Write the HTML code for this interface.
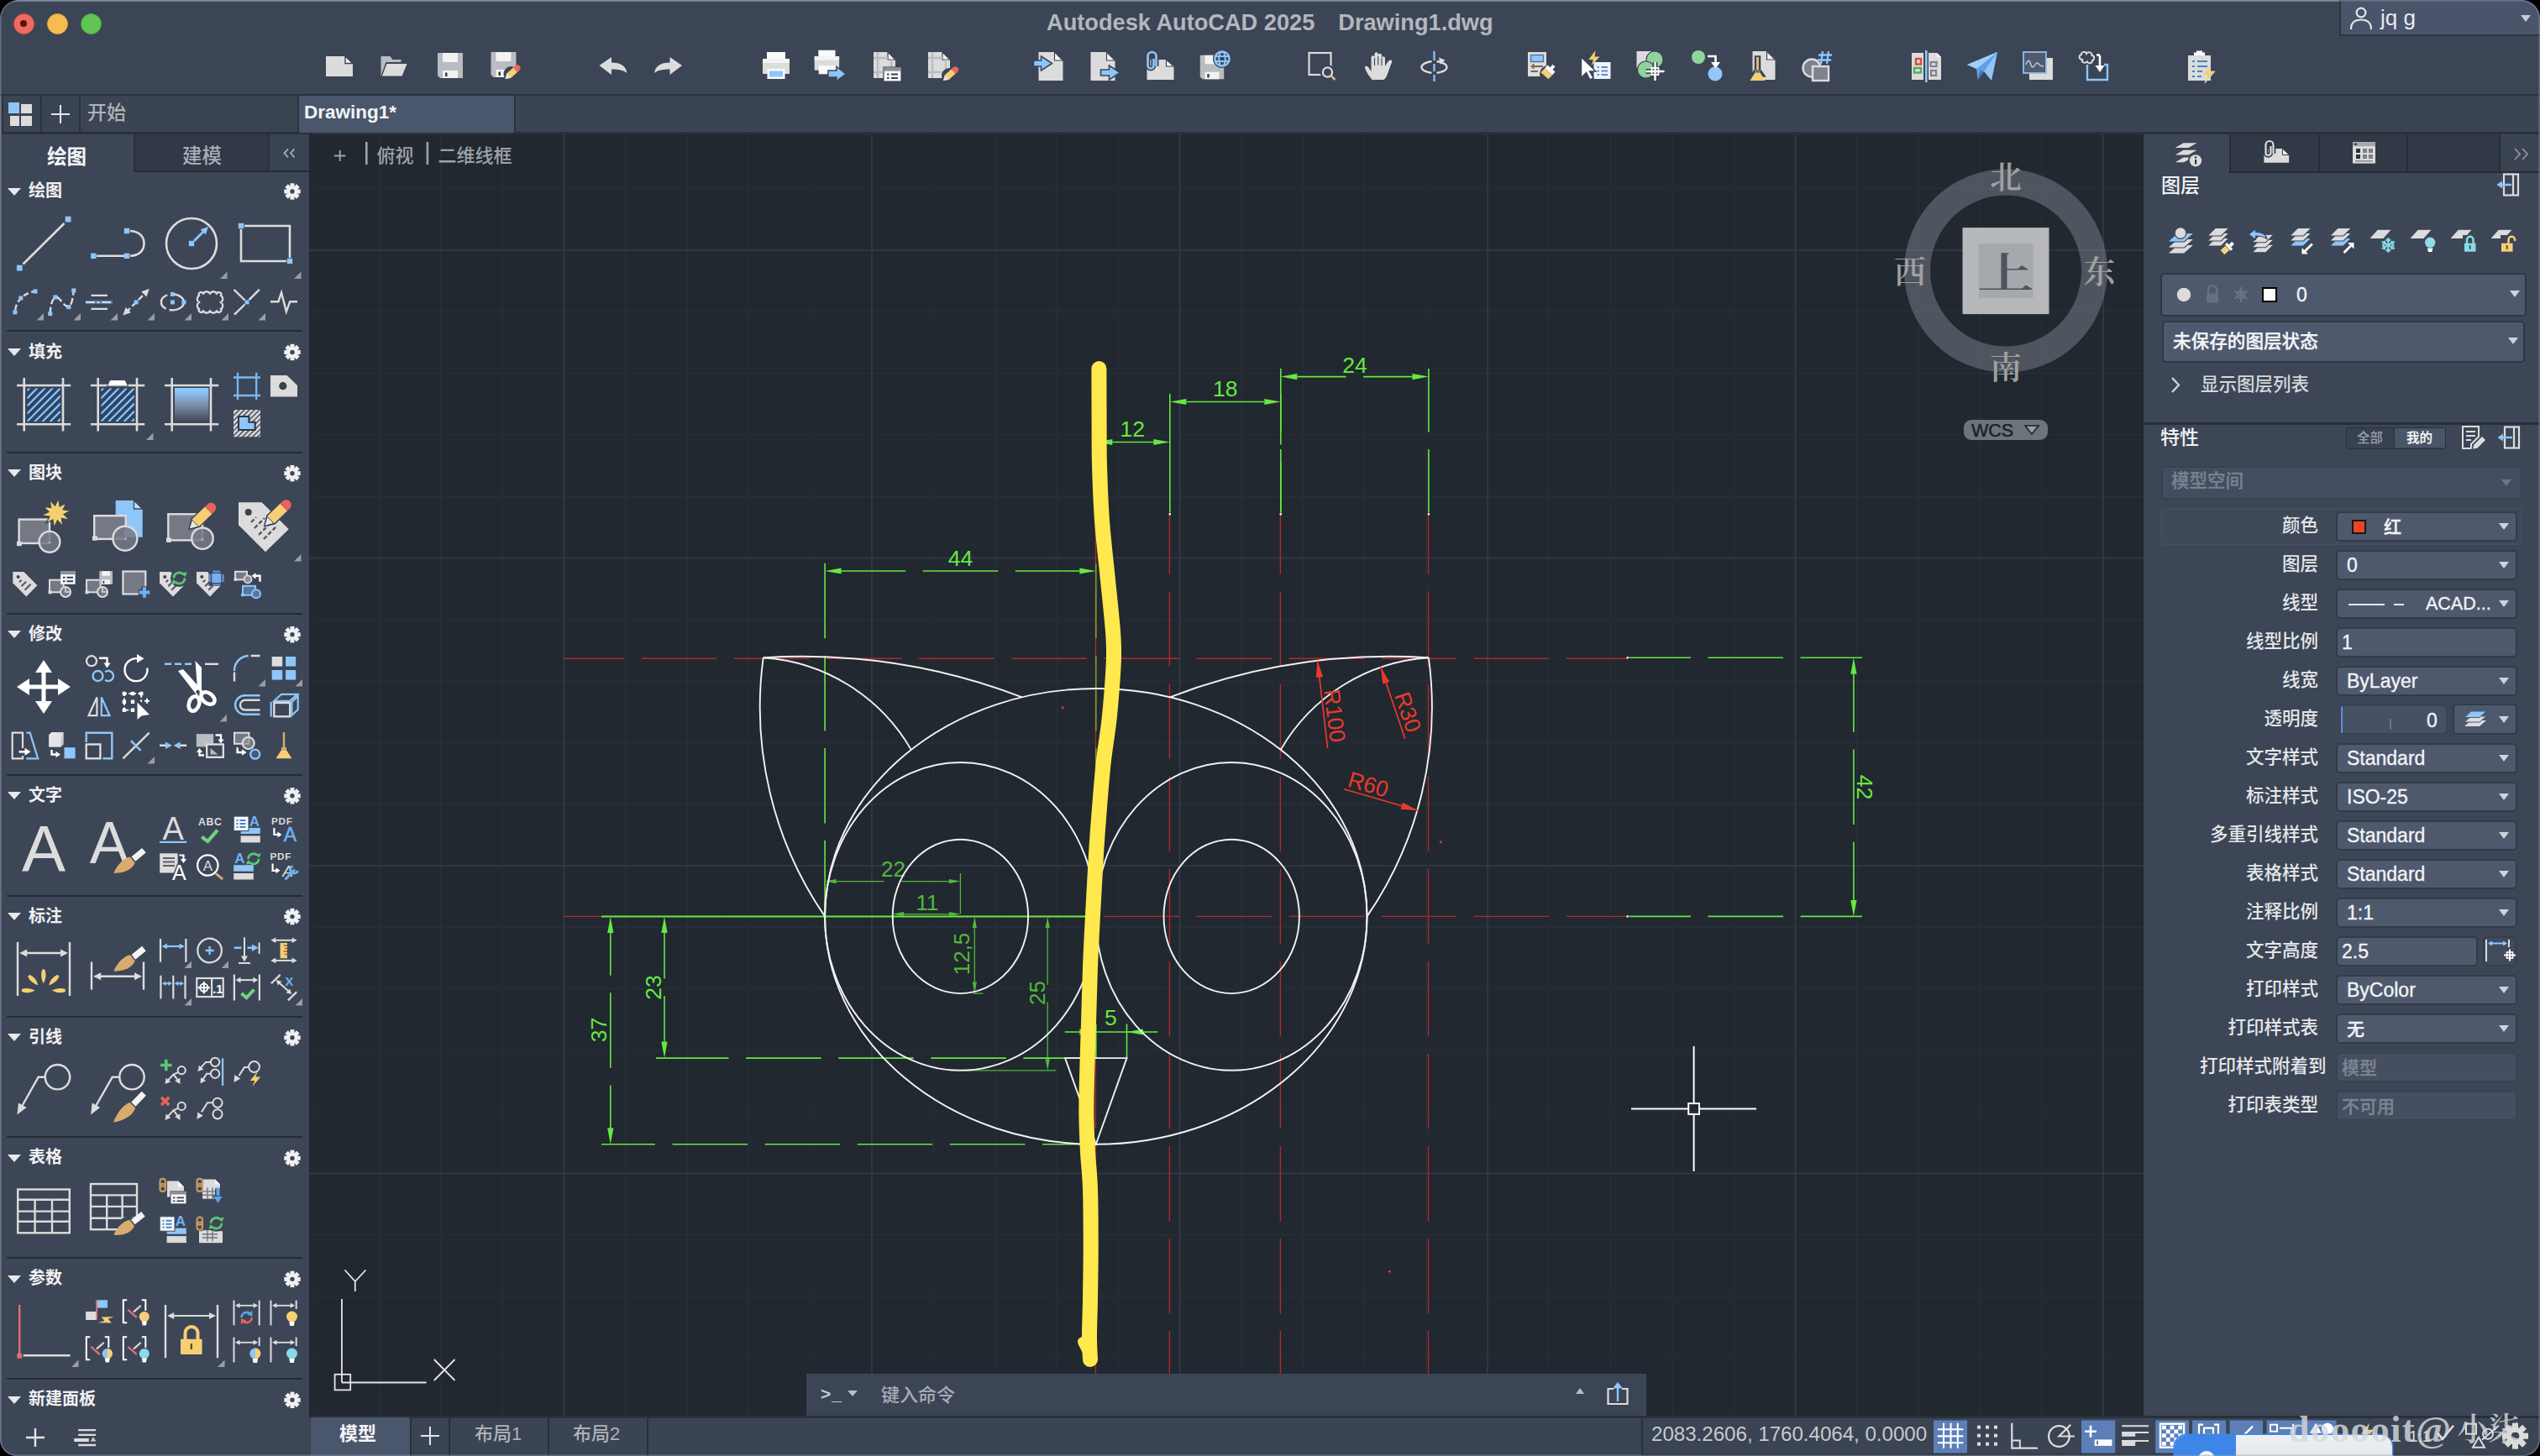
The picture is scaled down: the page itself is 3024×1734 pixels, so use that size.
<!DOCTYPE html><html lang="zh"><head><meta charset="utf-8"><title>Autodesk AutoCAD 2025 Drawing1.dwg</title><style>
*{box-sizing:border-box;margin:0;padding:0}
html,body{width:3024px;height:1734px;overflow:hidden;background:#000}
body{font-family:"Liberation Sans","Noto Sans CJK SC",sans-serif;color:#e6e8ec;position:relative}
.abs{position:absolute}
.t{position:absolute;white-space:nowrap;line-height:1}
#win{position:absolute;left:0;top:0;width:3024px;height:1734px;background:#3c4555;border-radius:22px 22px 20px 20px;overflow:hidden}
#canvas{position:absolute;left:368px;top:160px;width:2184px;height:1526px;background:#212830;overflow:hidden}
.fld{position:absolute;background:#4e596e;border:2px solid #333b48;border-radius:5px}
.fld.dis{background:#454f61;border-color:#3a4351}
.lbl{position:absolute;white-space:nowrap;line-height:1;text-align:right;font-size:21.5px;color:#e4e6ea;font-weight:500}
.val{position:absolute;white-space:nowrap;line-height:1;font-size:22px;color:#f2f3f5;font-weight:500;-webkit-text-stroke-width:0.35px}
.arr{position:absolute;width:0;height:0;border-left:6.5px solid transparent;border-right:6.5px solid transparent;border-top:8.5px solid #d0d3d8}
.hdr{position:absolute;white-space:nowrap;line-height:1;font-size:20px;font-weight:700;color:#f0f1f3}
.tri{position:absolute;width:0;height:0;border-left:8px solid transparent;border-right:8px solid transparent;border-top:9px solid #e8e9eb}
.sep{position:absolute;left:8px;width:352px;height:2px;background:#252b35}
</style></head><body><div id="win">
<div id="canvas">
<svg class="abs" style="left:0;top:0" width="2184" height="1526" viewBox="368 160 2184 1526" font-family="'Liberation Sans','Noto Sans CJK SC',sans-serif">
<path d="M378.3 160V1686M451.6 160V1686M524.9 160V1686M598.2 160V1686M744.8 160V1686M818.1 160V1686M891.4 160V1686M964.7 160V1686M1111.3 160V1686M1184.6 160V1686M1257.9 160V1686M1331.2 160V1686M1477.8 160V1686M1551.1 160V1686M1624.4 160V1686M1697.7 160V1686M1844.3 160V1686M1917.6 160V1686M1990.9 160V1686M2064.2 160V1686M2210.8 160V1686M2284.1 160V1686M2357.4 160V1686M2430.7 160V1686M368 224.7H2552M368 371.3H2552M368 444.6H2552M368 517.9H2552M368 591.2H2552M368 737.8H2552M368 811.1H2552M368 884.4H2552M368 957.7H2552M368 1104.3H2552M368 1177.6H2552M368 1250.9H2552M368 1324.2H2552M368 1470.8H2552M368 1544.1H2552M368 1617.4H2552" stroke="#272e38" stroke-width="1.5" fill="none"/>
<path d="M671.5 160V1686M1038.0 160V1686M1404.5 160V1686M1771.0 160V1686M2137.5 160V1686M2504.0 160V1686M368 298.0H2552M368 664.5H2552M368 1031.0H2552M368 1397.5H2552" stroke="#343b47" stroke-width="1.6" fill="none"/>
<line x1="671.0" y1="784.2" x2="1937.0" y2="784.2" stroke="#b3282b" stroke-width="1.35" stroke-dasharray="89.5 20.6" stroke-dashoffset="17.30"/>
<line x1="671.0" y1="1091.4" x2="1937.0" y2="1091.4" stroke="#b3282b" stroke-width="1.35" stroke-dasharray="89.5 20.6" stroke-dashoffset="17.30"/>
<line x1="1304.4" y1="611.5" x2="1304.4" y2="1877.5" stroke="#b3282b" stroke-width="1.35" stroke-dasharray="89.5 20.6" stroke-dashoffset="17.30"/>
<line x1="1392.4" y1="611.5" x2="1392.4" y2="1877.5" stroke="#b3282b" stroke-width="1.35" stroke-dasharray="89.5 20.6" stroke-dashoffset="17.30"/>
<line x1="1524.4" y1="611.5" x2="1524.4" y2="1877.5" stroke="#b3282b" stroke-width="1.35" stroke-dasharray="89.5 20.6" stroke-dashoffset="17.30"/>
<line x1="1700.5" y1="611.5" x2="1700.5" y2="1877.5" stroke="#b3282b" stroke-width="1.35" stroke-dasharray="89.5 20.6" stroke-dashoffset="17.30"/>
<rect x="1264" y="841.7" width="2.4" height="2.4" fill="#e0453c"/>
<rect x="1714" y="1001.5" width="2.4" height="2.4" fill="#e0453c"/>
<rect x="1653" y="1513" width="2.4" height="2.4" fill="#e0453c"/>
<line x1="1392.8" y1="469.0" x2="1392.8" y2="610.5" stroke="#66e840" stroke-width="1.6"/>
<line x1="1524.8" y1="439.0" x2="1524.8" y2="610.5" stroke="#66e840" stroke-width="1.6" stroke-dasharray="89.5 20.6" stroke-dashoffset="14.05"/>
<line x1="1524.8" y1="469.0" x2="1524.8" y2="610.5" stroke="#66e840" stroke-width="1.6" stroke-dasharray="89.5 20.6" stroke-dashoffset="29.05"/>
<line x1="1700.9" y1="439.0" x2="1700.9" y2="610.5" stroke="#66e840" stroke-width="1.6" stroke-dasharray="89.5 20.6" stroke-dashoffset="14.05"/>
<line x1="1324.3" y1="526.5" x2="1373.3" y2="526.5" stroke="#66e840" stroke-width="1.6"/><polygon points="1304.8,526.5 1324.3,522.9 1324.3,530.1" fill="#66e840"/><polygon points="1392.8,526.5 1373.3,530.1 1373.3,522.9" fill="#66e840"/>
<line x1="1412.3" y1="478.5" x2="1505.3" y2="478.5" stroke="#66e840" stroke-width="1.6"/><polygon points="1392.8,478.5 1412.3,474.9 1412.3,482.1" fill="#66e840"/><polygon points="1524.8,478.5 1505.3,482.1 1505.3,474.9" fill="#66e840"/>
<line x1="1544.3" y1="448.6" x2="1681.4" y2="448.6" stroke="#66e840" stroke-width="1.6" stroke-dasharray="89.5 20.6" stroke-dashoffset="31.28"/><polygon points="1524.8,448.6 1544.3,445.0 1544.3,452.2" fill="#66e840"/><polygon points="1700.9,448.6 1681.4,452.2 1681.4,445.0" fill="#66e840"/>
<text x="1348.3" y="519.8" fill="#66e840" font-size="26.5" text-anchor="middle">12</text>
<text x="1458.8" y="472.0" fill="#66e840" font-size="26.5" text-anchor="middle">18</text>
<text x="1612.9" y="444.0" fill="#66e840" font-size="26.5" text-anchor="middle">24</text>
<line x1="982.1" y1="670.0" x2="982.1" y2="1091.4" stroke="#66e840" stroke-width="1.6" stroke-dasharray="89.5 20.6" stroke-dashoffset="-0.80"/>
<line x1="1304.8" y1="670.0" x2="1304.8" y2="1091.4" stroke="#7f9a28" stroke-width="1.6" stroke-dasharray="89.5 20.6" stroke-dashoffset="-0.80"/>
<line x1="1001.6" y1="680.0" x2="1285.3" y2="680.0" stroke="#66e840" stroke-width="1.6" stroke-dasharray="89.5 20.6" stroke-dashoffset="12.98"/><polygon points="982.1,680.0 1001.6,676.4 1001.6,683.6" fill="#66e840"/><polygon points="1304.8,680.0 1285.3,683.6 1285.3,676.4" fill="#66e840"/>
<text x="1143.4" y="674.0" fill="#66e840" font-size="26.5" text-anchor="middle">44</text>
<line x1="716.0" y1="1091.4" x2="1304.8" y2="1091.4" stroke="#66e840" stroke-width="2"/>
<line x1="1143.4" y1="1040.0" x2="1143.4" y2="1088.4" stroke="#52b83a" stroke-width="1.3"/>
<line x1="995.6" y1="1049.6" x2="1129.9" y2="1049.6" stroke="#52b83a" stroke-width="1.3" stroke-dasharray="89.5 20.6" stroke-dashoffset="32.62"/><polygon points="982.1,1049.6 995.6,1047.0 995.6,1052.2" fill="#52b83a"/><polygon points="1143.4,1049.6 1129.9,1052.2 1129.9,1047.0" fill="#52b83a"/>
<text x="1063.5" y="1044.0" fill="#52b83a" font-size="26" text-anchor="middle">22</text>
<line x1="1076.2" y1="1088.6" x2="1129.9" y2="1088.6" stroke="#52b83a" stroke-width="1.3"/><polygon points="1062.7,1088.6 1076.2,1086.0 1076.2,1091.2" fill="#52b83a"/><polygon points="1143.4,1088.6 1129.9,1091.2 1129.9,1086.0" fill="#52b83a"/>
<text x="1104.0" y="1083.8" fill="#52b83a" font-size="26" text-anchor="middle">11</text>
<line x1="1160.3" y1="1104.9" x2="1160.3" y2="1169.6" stroke="#52b83a" stroke-width="1.3"/><polygon points="1160.3,1091.4 1162.9,1104.9 1157.7,1104.9" fill="#52b83a"/><polygon points="1160.3,1183.1 1157.7,1169.6 1162.9,1169.6" fill="#52b83a"/>
<line x1="1158.3" y1="1183.1" x2="1170.3" y2="1183.1" stroke="#52b83a" stroke-width="1.3"/>
<text x="1154.0" y="1136.0" fill="#52b83a" font-size="26" text-anchor="middle" transform="rotate(-90 1154.0 1136.0)">12,5</text>
<line x1="1247.2" y1="1104.9" x2="1247.2" y2="1261.3" stroke="#52b83a" stroke-width="1.3" stroke-dasharray="89.5 20.6" stroke-dashoffset="21.61"/><polygon points="1247.2,1091.4 1249.8,1104.9 1244.6,1104.9" fill="#52b83a"/><polygon points="1247.2,1274.8 1244.6,1261.3 1249.8,1261.3" fill="#52b83a"/>
<line x1="1146.0" y1="1274.8" x2="1257.0" y2="1274.8" stroke="#52b83a" stroke-width="1.3"/>
<text x="1244.0" y="1182.6" fill="#52b83a" font-size="26" text-anchor="middle" transform="rotate(-90 1244.0 1182.6)">25</text>
<line x1="726.8" y1="1110.9" x2="726.8" y2="1343.3" stroke="#66e840" stroke-width="1.6" stroke-dasharray="89.5 20.6" stroke-dashoffset="38.65"/><polygon points="726.8,1091.4 730.4,1110.9 723.2,1110.9" fill="#66e840"/><polygon points="726.8,1362.8 723.2,1343.3 730.4,1343.3" fill="#66e840"/>
<line x1="716.0" y1="1362.8" x2="1304.8" y2="1362.8" stroke="#66e840" stroke-width="1.6" stroke-dasharray="89.5 20.6" stroke-dashoffset="25.60"/>
<text x="722.0" y="1226.5" fill="#66e840" font-size="26.5" text-anchor="middle" transform="rotate(-90 722.0 1226.5)">37</text>
<line x1="791.0" y1="1110.9" x2="791.0" y2="1240.6" stroke="#66e840" stroke-width="1.6" stroke-dasharray="89.5 20.6" stroke-dashoffset="34.95"/><polygon points="791.0,1091.4 794.6,1110.9 787.4,1110.9" fill="#66e840"/><polygon points="791.0,1260.1 787.4,1240.6 794.6,1240.6" fill="#66e840"/>
<line x1="781.0" y1="1260.1" x2="1304.8" y2="1260.1" stroke="#66e840" stroke-width="1.6" stroke-dasharray="89.5 20.6" stroke-dashoffset="3.05"/>
<text x="787.4" y="1176.0" fill="#66e840" font-size="26.5" text-anchor="middle" transform="rotate(-90 787.4 1176.0)">23</text>
<line x1="1341.5" y1="1219.5" x2="1341.5" y2="1260.1" stroke="#66e840" stroke-width="1.6"/>
<line x1="1304.8" y1="1219.5" x2="1304.8" y2="1260.1" stroke="#66e840" stroke-width="1.6"/>
<line x1="1267.7" y1="1229.0" x2="1378.3" y2="1229.0" stroke="#66e840" stroke-width="1.6"/>
<polygon points="1341.5,1229.0 1361.0,1225.4 1361.0,1232.6" fill="#66e840"/>
<polygon points="1304.8,1229.0 1285.3,1232.6 1285.3,1225.4" fill="#66e840"/>
<text x="1322.4" y="1221.0" fill="#66e840" font-size="26.5" text-anchor="middle">5</text>
<line x1="1939.5" y1="783.3" x2="2217.0" y2="783.3" stroke="#66e840" stroke-width="1.6" stroke-dasharray="89.5 20.6" stroke-dashoffset="16.10"/>
<line x1="1939.5" y1="1091.4" x2="2217.0" y2="1091.4" stroke="#66e840" stroke-width="1.6" stroke-dasharray="89.5 20.6" stroke-dashoffset="16.10"/>
<line x1="2206.9" y1="802.8" x2="2206.9" y2="1071.9" stroke="#66e840" stroke-width="1.6" stroke-dasharray="89.5 20.6" stroke-dashoffset="20.32"/><polygon points="2206.9,783.3 2210.5,802.8 2203.3,802.8" fill="#66e840"/><polygon points="2206.9,1091.4 2203.3,1071.9 2210.5,1071.9" fill="#66e840"/>
<text x="2210.5" y="937.4" fill="#66e840" font-size="26.5" text-anchor="middle" transform="rotate(90 2210.5 937.4)">42</text>
<rect x="1936.5" y="782.1" width="2.4" height="2.4" fill="#f4f4d0"/>
<rect x="1936.5" y="1090.2" width="2.4" height="2.4" fill="#f4f4d0"/>
<rect x="1391.6" y="611.1" width="2.4" height="2.4" fill="#f4f4d0"/>
<rect x="1523.6" y="611.1" width="2.4" height="2.4" fill="#f4f4d0"/>
<rect x="1699.7" y="611.1" width="2.4" height="2.4" fill="#f4f4d0"/>
<g fill="none" stroke="#f2f2f2" stroke-width="1.9"><ellipse cx="1304.8" cy="1091.4" rx="322.7" ry="271.4"/><ellipse cx="1143.4" cy="1091.4" rx="161.4" ry="183.4"/><ellipse cx="1143.4" cy="1091.4" rx="80.7" ry="91.7"/><path d="M1216.8 830.3A733.5 733.5 0 0 0 908.7 783.3"/><path d="M1084.8 892.9A220.1 220.1 0 0 0 908.7 783.3"/><path d="M908.7 783.3A440.1 440.1 0 0 0 982.1 1091.4"/><ellipse cx="1466.2" cy="1091.4" rx="161.4" ry="183.4"/><ellipse cx="1466.2" cy="1091.4" rx="80.7" ry="91.7"/><path d="M1392.8 830.3A733.5 733.5 0 0 1 1700.9 783.3"/><path d="M1524.8 892.9A220.1 220.1 0 0 1 1700.9 783.3"/><path d="M1700.9 783.3A440.1 440.1 0 0 1 1627.5 1091.4"/><path d="M1268.1 1260.1H1341.5L1304.8 1362.8Z"/></g>
<line x1="1568.6" y1="786.8" x2="1580.6" y2="891.0" stroke="#ea3a2c" stroke-width="1.7"/><polygon points="1568.6,786.8 1575.1,806.2 1566.7,807.1" fill="#ea3a2c"/><text x="1580.0" y="853.5" fill="#ea3a2c" font-size="26.5" text-anchor="middle" transform="rotate(83.4 1580.0 853.5)">R100</text>
<line x1="1643.8" y1="794.3" x2="1672.8" y2="879.7" stroke="#ea3a2c" stroke-width="1.7"/><polygon points="1643.8,794.3 1654.2,811.9 1646.3,814.6" fill="#ea3a2c"/><text x="1667.5" y="851.0" fill="#ea3a2c" font-size="26.5" text-anchor="middle" transform="rotate(71.2 1667.5 851.0)">R30</text>
<line x1="1600.0" y1="939.7" x2="1688.0" y2="965.3" stroke="#ea3a2c" stroke-width="1.7"/><polygon points="1688.0,965.3 1667.6,963.7 1670.0,955.7" fill="#ea3a2c"/><text x="1626.5" y="943.0" fill="#ea3a2c" font-size="26.5" text-anchor="middle" transform="rotate(16.2 1626.5 943.0)">R60</text>
<path d="M1308.4 439C1308.4 449.2 1308.5 480.8 1308.6 500.0C1308.7 519.2 1308.4 534.0 1309.0 554.0C1309.6 574.0 1310.4 598.0 1312.0 620.0C1313.6 642.0 1316.3 664.0 1318.5 686.0C1320.7 708.0 1323.8 736.0 1325.0 752.0C1326.2 768.0 1326.2 771.1 1326.0 782.0C1325.8 792.9 1325.0 804.4 1324.0 817.6C1323.0 830.9 1321.7 846.9 1320.0 861.5C1318.3 876.1 1315.7 890.8 1314.0 905.5C1312.3 920.2 1311.2 934.9 1310.0 949.5C1308.8 964.1 1307.6 978.8 1306.6 993.0C1305.6 1007.2 1304.9 1018.8 1304.0 1035.0C1303.1 1051.2 1302.0 1070.5 1301.0 1090.0C1300.0 1109.5 1298.8 1130.7 1298.0 1152.0C1297.2 1173.3 1296.7 1196.0 1296.0 1218.0C1295.3 1240.0 1294.4 1265.7 1294.0 1284.0C1293.6 1302.3 1293.2 1313.3 1293.4 1328.0C1293.6 1342.7 1294.2 1357.4 1295.0 1372.0C1295.8 1386.6 1297.4 1397.3 1298.0 1415.6C1298.6 1433.8 1298.7 1459.5 1298.7 1481.5C1298.7 1503.5 1298.3 1529.2 1298.0 1547.5C1297.7 1565.8 1297.0 1579.5 1297.0 1591.4C1297.0 1603.3 1297.8 1614.4 1298.0 1619.0" fill="none" stroke="#ffe94c" stroke-width="18" stroke-linecap="round" stroke-linejoin="round"/>
<path d="M1296 1612L1289 1598" fill="none" stroke="#ffe94c" stroke-width="12" stroke-linecap="round"/>
<g stroke="#ffffff" stroke-width="2" fill="none"><path d="M1942 1320.5H2010M2023 1320.5H2091M2016.6 1246V1314M2016.6 1327V1395"/><rect x="2010.2" y="1314.1" width="12.8" height="12.8"/></g>
<g stroke="#e6e6e6" stroke-width="1.8" fill="none"><rect x="398.6" y="1636.8" width="18.6" height="18.6"/><path d="M407 1646.5V1547M407 1646.5H507.5"/><path d="M410.5 1512.5L422.8 1526L435.5 1512.5M422.8 1526V1538"/><path d="M516.8 1619L541.5 1644M541.5 1619L516.8 1644"/></g>
<circle cx="2388" cy="322.6" r="105.5" fill="none" stroke="#848c96" stroke-opacity="0.46" stroke-width="31"/>
<rect x="2336.5" y="271.1" width="103" height="103" fill="#b6b8bb"/>
<rect x="2355.5" y="290.1" width="65" height="65" fill="#a5a8ad"/>
<text transform="translate(2388 342.5) scale(1.1 0.8)" x="0" y="0" font-size="62" font-weight="600" text-anchor="middle" fill="#50535a" font-family="'Noto Serif CJK SC','Liberation Serif',serif">上</text>
<text x="2388" y="223.8" font-size="38" font-weight="600" text-anchor="middle" fill="#a0a0a0" font-family="'Noto Serif CJK SC','Liberation Serif',serif">北</text>
<text x="2388" y="450.8" font-size="38" font-weight="600" text-anchor="middle" fill="#a0a0a0" font-family="'Noto Serif CJK SC','Liberation Serif',serif">南</text>
<text x="2274" y="337.2" font-size="38" font-weight="600" text-anchor="middle" fill="#a0a0a0" font-family="'Noto Serif CJK SC','Liberation Serif',serif">西</text>
<text x="2499.5" y="336.5" font-size="38" font-weight="600" text-anchor="middle" fill="#a0a0a0" font-family="'Noto Serif CJK SC','Liberation Serif',serif">东</text>
<rect x="2338" y="500" width="100" height="24" rx="9" fill="#6c747c"/>
<text x="2347" y="520" font-size="21.5" fill="#1d2127" stroke="#1d2127" stroke-width="0.5">WCS</text>
<path d="M2411 507H2427L2419 517Z" fill="#97a1aa" stroke="#1d2127" stroke-width="1.6"/>
<g fill="#9ea2a9" font-size="22" font-weight="500"><path d="M398 185.5H411.400M404.700 179V192" stroke="#9ea2a9" stroke-width="1.9"/><rect x="435" y="169" width="2.6" height="27"/><rect x="507.6" y="169" width="2.6" height="27"/><text x="448.5" y="192.5">俯视</text><text x="521.5" y="192.5">二维线框</text></g>
</svg>
<div class="abs" style="left:592px;top:1476px;width:1000px;height:50px;background:#3c4555"></div>
<div class="t" style="left:609px;top:1488.5px;font-size:21px;color:#c9ccd2;font-weight:700;letter-spacing:1px">&gt;_</div>
<div class="abs" style="left:641px;top:1496px;border-left:6px solid transparent;border-right:6px solid transparent;border-top:7px solid #b9bdc4"></div>
<div class="t" style="left:681px;top:1491px;font-size:22px;color:#a9adb5;font-weight:500">键入命令</div>
<div class="abs" style="left:1508px;top:1493px;border-left:5.5px solid transparent;border-right:5.5px solid transparent;border-bottom:7px solid #b9bdc4"></div>
<svg class="abs" style="left:1540px;top:1482px" width="36" height="36" viewBox="0 0 36 36" fill="none"><path d="M13 12H6.5V30H29.5V12H23" stroke="#dcdcdc" stroke-width="2.2"/><path d="M18 27V8" stroke="#8ec6fa" stroke-width="2.4"/><path d="M12 11.5L18 4L24 11.5Z" fill="#8ec6fa"/></svg>
</div>
<div class="abs" style="left:0;top:0;width:3024px;height:2px;background:#6a7383"></div>
<div class="abs" style="left:15.5px;top:15.5px;width:25px;height:25px;border-radius:50%;background:#ee6a5f;border:1px solid #d04e45"></div>
<div class="abs" style="left:55.5px;top:15.5px;width:25px;height:25px;border-radius:50%;background:#f5bd4f;border:1px solid #d8a137"></div>
<div class="abs" style="left:95.5px;top:15.5px;width:25px;height:25px;border-radius:50%;background:#61c554;border:1px solid #4aa73c"></div>
<div class="abs" style="left:24px;top:24px;width:8px;height:8px;border-radius:50%;background:#5c100c"></div>
<div class="t" style="left:1246px;top:12.5px;font-size:27.2px;font-weight:700;color:#b3b7be;word-spacing:0px">Autodesk AutoCAD 2025<span style="display:inline-block;width:28px"></span>Drawing1.dwg</div>
<div class="abs" style="left:2785px;top:0;width:239px;height:43px;background:#4a556b;border-left:2px solid #2f3643;border-bottom:2px solid #2f3643"></div>
<svg class="abs" style="left:2794px;top:5px" width="34" height="34" viewBox="0 0 34 34" fill="none" stroke="#e3e5e9" stroke-width="2.2"><circle cx="17" cy="10" r="5.4"/><path d="M5 30C5 21.500 10 18.500 17 18.500S29 21.500 29 30"/></svg>
<div class="t" style="left:2834px;top:7.5px;font-size:26px;color:#e8eaee">jq g</div>
<div class="arr" style="left:3001px;top:18px;border-top-color:#c9ccd2"></div>
<svg class="abs" style="left:0;top:56px" width="3024" height="48" viewBox="0 56 3024 48"><g transform="translate(384 59)"><path d="M4 8H26.500L36 16.500V32H4Z" fill="#dcdcdc"/><path d="M27 8V16.500H36Z" fill="#f4f4f4" stroke="#3c4555" stroke-width="1.4"/></g><g transform="translate(449.5 59)"><path d="M4 32V8H15L18 12H28V15H10Z" fill="#b9bcc0"/><path d="M10.5 16.5H36L29.5 32H4.5Z" fill="#dcdcdc" stroke="#3c4555" stroke-width="1.2"/></g><g transform="translate(516 59)"><path d="M5 4H35V34H8L5 31Z" fill="#b9bcc0"/><rect x="11" y="4" width="18" height="11" fill="#f2f2f2"/><rect x="11" y="25" width="18" height="9" fill="#f2f2f2"/><rect x="14" y="27.5" width="2.5" height="4.5" fill="#333a46"/></g><g transform="translate(581.5 59)"><g transform="translate(-2 -1)"><path d="M5 4H35V34H8L5 31Z" fill="#b9bcc0"/><rect x="11" y="4" width="18" height="11" fill="#f2f2f2"/><rect x="11" y="25" width="18" height="9" fill="#f2f2f2"/><rect x="14" y="27.5" width="2.5" height="4.5" fill="#333a46"/></g><circle cx="27" cy="29" r="9" fill="#3c4555"/><g transform="translate(20 35) rotate(-42)"><path d="M0 0L6 -3.6H19V3.6H6Z" fill="#f6cf74"/><path d="M0 0L6 -3.6V3.6Z" fill="#e8e4dc"/><path d="M16 -3.6H19.5A3.6 3.6 0 0 1 19.5 3.6H16Z" fill="#e8685e"/></g></g><g transform="translate(710 59)"><path d="M3.5 19L18 9V15.5C29 15.5 35.5 20 36.5 28C32 24.5 26 23.5 18 23.5V30Z" fill="#dcdcdc"/></g><g transform="translate(775.5 59)"><path d="M36.5 19L22 9V15.5C11 15.5 4.5 20 3.5 28C8 24.5 14 23.5 22 23.5V30Z" fill="#dcdcdc"/></g><g transform="translate(904 59)"><rect x="9" y="3" width="22" height="10" fill="#fbfbfb"/><path d="M4 11H36V29H4Z" fill="#dcdcdc"/><rect x="4" y="11" width="32" height="5" fill="#f4f4f4"/><rect x="9.5" y="23" width="21" height="12" fill="#fbfbfb"/><rect x="12" y="25.5" width="16" height="7" fill="#8ec6fa"/></g><g transform="translate(969 59)"><g transform="translate(-3 -2) scale(0.92)"><rect x="9" y="3" width="22" height="10" fill="#fbfbfb"/><path d="M4 11H36V29H4Z" fill="#dcdcdc"/><rect x="4" y="11" width="32" height="5" fill="#f4f4f4"/><rect x="9.5" y="23" width="21" height="11" fill="#fbfbfb"/></g><path d="M17 25H27V20.5L38 29L27 37.5V33H17Z" fill="#8ec6fa" stroke="#3c4555" stroke-width="1.5"/></g><g transform="translate(1035 59)"><path d="M5 3H22L31 12V34H5Z" fill="#dcdcdc"/><path d="M22 3V12H31Z" fill="#f6f6f6" stroke="#3c4555" stroke-width="1.2"/><path d="M10 3V34M5 10H22M5 27H31M26 12V34" stroke="#b9bcc0" stroke-width="2.4"/><rect x="17" y="21" width="21" height="17" fill="#fbfbfb" stroke="#3c4555" stroke-width="1.2"/><rect x="17.6" y="21.6" width="19.8" height="4" fill="#8a8e96"/><path d="M21 29.5H23.5M26 29.5H34M21 34H23.5M26 34H34" stroke="#3a424f" stroke-width="2"/></g><g transform="translate(1100 59)"><path d="M5 3H22L31 12V34H5Z" fill="#dcdcdc"/><path d="M22 3V12H31Z" fill="#f6f6f6" stroke="#3c4555" stroke-width="1.2"/><path d="M10 3V34M5 10H22M5 27H31M26 12V34" stroke="#b9bcc0" stroke-width="2.4"/><circle cx="30" cy="31" r="9" fill="#3c4555"/><g transform="translate(3 2)"><g transform="translate(20 35) rotate(-42)"><path d="M0 0L6 -3.6H19V3.6H6Z" fill="#f6cf74"/><path d="M0 0L6 -3.6V3.6Z" fill="#e8e4dc"/><path d="M16 -3.6H19.5A3.6 3.6 0 0 1 19.5 3.6H16Z" fill="#e8685e"/></g></g></g><g transform="translate(1229.5 59)"><path d="M7 3H26L36 13V37H7Z" fill="#dcdcdc"/><path d="M26 3V13H36Z" fill="#f6f6f6" stroke="#3c4555" stroke-width="1.2"/><path d="M1 13H10V8L23 16.5L10 25V20H1Z" fill="#8ec6fa" stroke="#3c4555" stroke-width="1.6"/></g><g transform="translate(1294.5 59)"><g transform="translate(-3 0)"><path d="M7 3H26L36 13V37H7Z" fill="#dcdcdc"/><path d="M26 3V13H36Z" fill="#f6f6f6" stroke="#3c4555" stroke-width="1.2"/></g><path d="M16 24H26V19L39 27.5L26 36V31H16Z" fill="#8ec6fa" stroke="#3c4555" stroke-width="1.6"/></g><g transform="translate(1360.5 59)"><path d="M5 12H28L37 20V36H5Z" fill="#dcdcdc"/><path d="M28 12V20H37Z" fill="#f6f6f6" stroke="#3c4555" stroke-width="1.2"/><path d="M13 11V19A3.5 3.5 0 0 1 6 19V8A5 5 0 0 1 16 8V20" fill="none" stroke="#3c4555" stroke-width="6"/><path d="M13 11V19A3.5 3.5 0 0 1 6 19V8A5 5 0 0 1 16 8V20" fill="none" stroke="#8ec6fa" stroke-width="2.6"/></g><g transform="translate(1426 59)"><g transform="translate(-2 3) scale(0.95)"><path d="M5 4H35V34H8L5 31Z" fill="#b9bcc0"/><rect x="11" y="4" width="14" height="11" fill="#f2f2f2"/><rect x="11" y="25" width="18" height="9" fill="#f2f2f2"/><rect x="14" y="27.5" width="2.5" height="4.5" fill="#333a46"/></g><circle cx="29" cy="11" r="11" fill="#3c4555"/><circle cx="29" cy="11" r="8.6" fill="none" stroke="#8ec6fa" stroke-width="2.4"/><ellipse cx="29" cy="11" rx="3.8" ry="8.6" fill="none" stroke="#8ec6fa" stroke-width="2"/><path d="M20.5 8H37.5M20.5 14H37.5" stroke="#8ec6fa" stroke-width="2"/></g><g transform="translate(1554.5 59)"><rect x="4" y="4" width="26" height="26" fill="none" stroke="#dcdcdc" stroke-width="2.2"/><circle cx="26" cy="27" r="9" fill="#3c4555"/><circle cx="26" cy="27" r="5.6" fill="none" stroke="#dcdcdc" stroke-width="2.2"/><path d="M30.5 31.5L35 36" stroke="#d9b47c" stroke-width="2.6"/></g><g transform="translate(1621.5 59)"><path d="M12 36C9 32 5 27 3.5 22C3 19.5 6 19 7.5 21L11 26V9.5C11 6.5 15 6.5 15 9.5V5.500C15 2.5 19.200 2.5 19.200 5.500V7C19.200 4 23.500 4 23.500 7V10.500C23.500 7.5 27.500 7.5 27.500 10.500V20C29 17 30.5 14.500 32.500 13C34.500 11.800 36.500 13.500 35.500 15.500C33.500 19.500 32 25 30 30C29 33 27.500 35 26 36Z" fill="#dcdcdc"/><path d="M15 10V19M19.2 8V18.5M23.5 10V19" stroke="#3c4555" stroke-width="1.1"/></g><g transform="translate(1687.5 59)"><ellipse cx="20" cy="21" rx="15" ry="7" fill="none" stroke="#dcdcdc" stroke-width="2.4"/><path d="M20 3V37" stroke="#3c4555" stroke-width="6"/><path d="M20 2V13M20 17V26M20 30V38" stroke="#8ec6fa" stroke-width="2.2"/><path d="M26 9L33 13L26.500 17.5Z" fill="#dcdcdc" transform="rotate(-8 29 13)"/></g><g transform="translate(1815 59)"><rect x="4" y="3" width="22" height="29" fill="#dcdcdc"/><rect x="7.5" y="6.5" width="15" height="8" fill="#8ec6fa" stroke="#4d6d9a" stroke-width="1.3"/><path d="M7.5 20H22M7.5 26H16M10.5 17V23" stroke="#76684f" stroke-width="2"/><circle cx="28" cy="29" r="10" fill="#3c4555"/><g transform="translate(27 28) rotate(42)"><rect x="-6" y="-2.5" width="12" height="7" fill="#f3cf7a"/><rect x="-6" y="-7.5" width="12" height="5" fill="#fbfbfb"/><rect x="-2" y="-12" width="4" height="5" fill="#fbfbfb"/></g></g><g transform="translate(1880.5 59)"><rect x="17" y="15" width="20" height="20" fill="#f0f3f7"/><path d="M21 21H23.500M26 21H33.500M21 25.500H23.500M26 25.500H33.500M21 30H23.500M26 30H33.500" stroke="#5b8fd0" stroke-width="2"/><path d="M2 9V33.500L8 27.500L12.500 36L16.500 34L12 26H19.500Z" fill="#ffffff" stroke="#3c4555" stroke-width="1.4"/><path d="M19 1L11 12H16.500L14 19L24 8.500H18Z" fill="#f6cf74"/></g><g transform="translate(1946.5 59)"><rect x="2" y="2" width="20" height="20" fill="#dcdcdc"/><circle cx="23.500" cy="12" r="10" fill="#8fd49a" stroke="#3c4555" stroke-width="1.2"/><circle cx="13" cy="24" r="10" fill="#8fd49a" stroke="#3c4555" stroke-width="1.2"/><path d="M24 15V37M13 26H35" stroke="#3c4555" stroke-width="6"/><path d="M24 15V37M13 26H35" stroke="#ffffff" stroke-width="2.4"/><rect x="20" y="22" width="8" height="8" fill="none" stroke="#ffffff" stroke-width="1.8"/></g><g transform="translate(2013 59)"><circle cx="9" cy="9" r="8" fill="#8fd49a"/><circle cx="29" cy="29" r="8.500" fill="#93c7fb"/><path d="M20 8H29.500V17" fill="none" stroke="#ffffff" stroke-width="2.600"/><path d="M24 15L29.500 22.500L35 15Z" fill="#ffffff"/></g><g transform="translate(2078.5 59)"><g transform="translate(3 0)"><path d="M5 2H22L32 12V36H5Z" fill="#dcdcdc"/><path d="M22 2V12H32Z" fill="#f6f6f6" stroke="#3c4555" stroke-width="1.2"/></g><path d="M12 9H16V24L21 31H7L12 24Z" fill="#3c4555" stroke="#3c4555" stroke-width="3.500"/><path d="M12.500 9H15.500V24H12.500Z" fill="#d9b47c"/><path d="M10 24H18L17 27.500H11Z" fill="#6f7480"/><path d="M11 27.500H17L23 37H5Z" fill="#f6cf74"/></g><g transform="translate(2144 59)"><circle cx="13" cy="22" r="10.500" fill="#7d828e" stroke="#dcdcdc" stroke-width="2.400"/><rect x="14" y="20" width="19" height="17" fill="#7d828e" stroke="#dcdcdc" stroke-width="2.400"/><path d="M26 2L24 17M33 2L31 17M21 6.500H37M20 12.500H36" stroke="#8ec6fa" stroke-width="2.300"/></g><g transform="translate(2274 59)"><rect x="2" y="4" width="14" height="32" fill="#dcdcdc"/><path d="M22 4H32L37 9V36H22Z" fill="#dcdcdc"/><path d="M32 4V9H37Z" fill="#fafafa"/><rect x="18" y="1" width="2.600" height="38" fill="#8ec6fa"/><rect x="7" y="11" width="6" height="6.500" fill="none" stroke="#e04840" stroke-width="2.400"/><rect x="5" y="22" width="8" height="5.500" fill="none" stroke="#4fae5a" stroke-width="2.400"/><rect x="24.500" y="15" width="7" height="5" fill="none" stroke="#7f8188" stroke-width="2.200"/><rect x="25" y="25" width="6" height="6" fill="none" stroke="#7f8188" stroke-width="2.200"/></g><g transform="translate(2340 59)"><path d="M2 18L38 3L31 37L22 26Z" fill="#8ec6fa"/><path d="M38 3L13 23L14.500 36L22 26" fill="#5f9fe6"/><path d="M38 3L13 23L2 18Z" fill="#9dd0fc"/><path d="M14.500 36L17.500 25L22 26Z" fill="#3f77c2"/></g><g transform="translate(2406 59)"><rect x="10" y="10" width="28" height="26" fill="#dcdcdc"/><rect x="3" y="3" width="27" height="25" fill="#525b6c" stroke="#8fbdf0" stroke-width="1.800"/><path d="M6 18C8 12 10 12 11.500 17S15 22 17 18S21 17 23 19L27 20" fill="none" stroke="#a9c4e6" stroke-width="1.600"/></g><g transform="translate(2472 59)"><path d="M13 18V36H37V18H33" fill="none" stroke="#8ec6fa" stroke-width="2.400"/><path d="M6 6C6 2 11 2 12 5C14 2 19 3 18.500 7C22 7 22 12 19 13C19 17 14 17 13 14.500C10 17 6 15 7 12C3 12 2.500 7 6 6Z" fill="#3c4555" stroke="#dcdcdc" stroke-width="2"/><path d="M28 7V24" stroke="#ffffff" stroke-width="2.600"/><path d="M22.500 19L28 27L33.500 19Z" fill="#ffffff"/><path d="M24 6.500H28" stroke="#ffffff" stroke-width="2.600"/></g><g transform="translate(2600 59)"><rect x="5" y="7" width="27" height="30" fill="#dcdcdc"/><path d="M12 7V3.500H25V7Z" fill="#ffffff"/><rect x="15" y="1.500" width="7" height="3" fill="#ffffff"/><path d="M10 14H13M16 14H28M10 20H13M16 20H28M10 26H13M16 26H22M10 32H13M16 32H21" stroke="#4d82c8" stroke-width="2.200"/><path d="M31 19L22 31H28L25 40L37 26H30.500Z" fill="#f6cf74" stroke="#dcdcdc" stroke-width="0.800"/></g></svg>
<div class="abs" style="left:0;top:112px;width:3024px;height:2px;background:#2b313c"></div>
<div class="abs" style="left:0;top:114px;width:3024px;height:44px;background:#3b4453"></div>
<div class="abs" style="left:0;top:157px;width:3024px;height:3px;background:#2b313c"></div>
<div class="abs" style="left:2px;top:114px;width:2px;height:44px;background:#2b313c"></div>
<div class="abs" style="left:48px;top:114px;width:2px;height:44px;background:#2b313c"></div>
<div class="abs" style="left:94px;top:114px;width:2px;height:44px;background:#2b313c"></div>
<div class="abs" style="left:354px;top:114px;width:2px;height:44px;background:#2b313c"></div>
<div class="abs" style="left:612px;top:114px;width:2px;height:44px;background:#2b313c"></div>
<div class="abs" style="left:356px;top:114px;width:256px;height:43.500px;background:#4a566c"></div>
<div class="abs" style="left:10px;top:122px;width:13px;height:13px;background:#8ec6fa"></div><div class="abs" style="left:25px;top:124px;width:13px;height:11px;background:#dcdcdc"></div><div class="abs" style="left:12px;top:138px;width:11px;height:12px;background:#dcdcdc"></div><div class="abs" style="left:25px;top:138px;width:13px;height:12px;background:#dcdcdc"></div>
<svg class="abs" style="left:58px;top:122px" width="28" height="28"><path d="M3 14H25M14 3V25" stroke="#e4e5e8" stroke-width="2"/></svg>
<div class="t" style="left:104px;top:123px;font-size:23px;color:#aeb2b9;font-weight:500">开始</div>
<div class="t" style="left:362px;top:123.2px;font-size:22.5px;color:#f3f4f6;font-weight:700">Drawing1*</div>
<div class="abs" style="left:0;top:160px;width:368px;height:1574px;background:#3d4656"></div>
<div class="abs" style="left:0;top:114px;width:2px;height:1620px;background:#4c5567"></div>
<div class="abs" style="left:159px;top:160px;width:162px;height:45px;background:#313846;border-bottom:2.500px solid #262c36;border-left:2px solid #2a303b;border-right:2px solid #2a303b"></div>
<div class="abs" style="left:321px;top:160px;width:47px;height:45px;background:#3a4352;border-bottom:2.500px solid #262c36"></div>
<div class="t" style="left:56px;top:175.5px;font-size:23.500px;font-weight:700;color:#f4f5f7">绘图</div>
<div class="t" style="left:217px;top:175px;font-size:23.500px;font-weight:500;color:#a9adb5">建模</div>
<svg class="abs" style="left:334px;top:172px" width="24" height="20" fill="none"><path d="M9 5.300L4.500 10.300L9 15.300M16.500 5.300L12 10.300L16.500 15.300" stroke="#a7abb3" stroke-width="1.800"/></svg>
<div class="tri" style="left:9px;top:223.5px"></div>
<div class="hdr" style="left:34px;top:217.0px">绘图</div>
<div class="tri" style="left:9px;top:415.0px"></div>
<div class="hdr" style="left:34px;top:408.5px">填充</div>
<div class="tri" style="left:9px;top:559.2px"></div>
<div class="hdr" style="left:34px;top:552.7px">图块</div>
<div class="tri" style="left:9px;top:751.2px"></div>
<div class="hdr" style="left:34px;top:744.7px">修改</div>
<div class="tri" style="left:9px;top:943.3px"></div>
<div class="hdr" style="left:34px;top:936.8px">文字</div>
<div class="tri" style="left:9px;top:1087.1px"></div>
<div class="hdr" style="left:34px;top:1080.6px">标注</div>
<div class="tri" style="left:9px;top:1231.3px"></div>
<div class="hdr" style="left:34px;top:1224.8px">引线</div>
<div class="tri" style="left:9px;top:1374.9px"></div>
<div class="hdr" style="left:34px;top:1368.4px">表格</div>
<div class="tri" style="left:9px;top:1518.9px"></div>
<div class="hdr" style="left:34px;top:1512.4px">参数</div>
<div class="tri" style="left:9px;top:1662.8px"></div>
<div class="hdr" style="left:34px;top:1656.3px">新建面板</div>
<div class="sep" style="top:393.4px"></div>
<div class="sep" style="top:537.6px"></div>
<div class="sep" style="top:730.0px"></div>
<div class="sep" style="top:921.6px"></div>
<div class="sep" style="top:1065.5px"></div>
<div class="sep" style="top:1209.6px"></div>
<div class="sep" style="top:1353.0px"></div>
<div class="sep" style="top:1497.0px"></div>
<div class="sep" style="top:1641.4px"></div>
<svg class="abs" style="left:0;top:205px" width="368" height="1529" viewBox="0 205 368 1529" fill="none" font-family="'Liberation Sans','Noto Sans CJK SC',sans-serif"><rect x="345.5" y="218.3" width="5" height="6" fill="#f0f1f3" transform="rotate(0 348 228)"/><rect x="345.5" y="218.3" width="5" height="6" fill="#f0f1f3" transform="rotate(45 348 228)"/><rect x="345.5" y="218.3" width="5" height="6" fill="#f0f1f3" transform="rotate(90 348 228)"/><rect x="345.5" y="218.3" width="5" height="6" fill="#f0f1f3" transform="rotate(135 348 228)"/><rect x="345.5" y="218.3" width="5" height="6" fill="#f0f1f3" transform="rotate(180 348 228)"/><rect x="345.5" y="218.3" width="5" height="6" fill="#f0f1f3" transform="rotate(225 348 228)"/><rect x="345.5" y="218.3" width="5" height="6" fill="#f0f1f3" transform="rotate(270 348 228)"/><rect x="345.5" y="218.3" width="5" height="6" fill="#f0f1f3" transform="rotate(315 348 228)"/><circle cx="348" cy="228" r="6.199999999999999" fill="#f0f1f3"/><circle cx="348" cy="228" r="2.700" fill="#3d4656"/><rect x="345.5" y="409.8" width="5" height="6" fill="#f0f1f3" transform="rotate(0 348 419.5)"/><rect x="345.5" y="409.8" width="5" height="6" fill="#f0f1f3" transform="rotate(45 348 419.5)"/><rect x="345.5" y="409.8" width="5" height="6" fill="#f0f1f3" transform="rotate(90 348 419.5)"/><rect x="345.5" y="409.8" width="5" height="6" fill="#f0f1f3" transform="rotate(135 348 419.5)"/><rect x="345.5" y="409.8" width="5" height="6" fill="#f0f1f3" transform="rotate(180 348 419.5)"/><rect x="345.5" y="409.8" width="5" height="6" fill="#f0f1f3" transform="rotate(225 348 419.5)"/><rect x="345.5" y="409.8" width="5" height="6" fill="#f0f1f3" transform="rotate(270 348 419.5)"/><rect x="345.5" y="409.8" width="5" height="6" fill="#f0f1f3" transform="rotate(315 348 419.5)"/><circle cx="348" cy="419.5" r="6.199999999999999" fill="#f0f1f3"/><circle cx="348" cy="419.5" r="2.700" fill="#3d4656"/><rect x="345.5" y="554.0" width="5" height="6" fill="#f0f1f3" transform="rotate(0 348 563.7)"/><rect x="345.5" y="554.0" width="5" height="6" fill="#f0f1f3" transform="rotate(45 348 563.7)"/><rect x="345.5" y="554.0" width="5" height="6" fill="#f0f1f3" transform="rotate(90 348 563.7)"/><rect x="345.5" y="554.0" width="5" height="6" fill="#f0f1f3" transform="rotate(135 348 563.7)"/><rect x="345.5" y="554.0" width="5" height="6" fill="#f0f1f3" transform="rotate(180 348 563.7)"/><rect x="345.5" y="554.0" width="5" height="6" fill="#f0f1f3" transform="rotate(225 348 563.7)"/><rect x="345.5" y="554.0" width="5" height="6" fill="#f0f1f3" transform="rotate(270 348 563.7)"/><rect x="345.5" y="554.0" width="5" height="6" fill="#f0f1f3" transform="rotate(315 348 563.7)"/><circle cx="348" cy="563.7" r="6.199999999999999" fill="#f0f1f3"/><circle cx="348" cy="563.7" r="2.700" fill="#3d4656"/><rect x="345.5" y="746.0" width="5" height="6" fill="#f0f1f3" transform="rotate(0 348 755.7)"/><rect x="345.5" y="746.0" width="5" height="6" fill="#f0f1f3" transform="rotate(45 348 755.7)"/><rect x="345.5" y="746.0" width="5" height="6" fill="#f0f1f3" transform="rotate(90 348 755.7)"/><rect x="345.5" y="746.0" width="5" height="6" fill="#f0f1f3" transform="rotate(135 348 755.7)"/><rect x="345.5" y="746.0" width="5" height="6" fill="#f0f1f3" transform="rotate(180 348 755.7)"/><rect x="345.5" y="746.0" width="5" height="6" fill="#f0f1f3" transform="rotate(225 348 755.7)"/><rect x="345.5" y="746.0" width="5" height="6" fill="#f0f1f3" transform="rotate(270 348 755.7)"/><rect x="345.5" y="746.0" width="5" height="6" fill="#f0f1f3" transform="rotate(315 348 755.7)"/><circle cx="348" cy="755.7" r="6.199999999999999" fill="#f0f1f3"/><circle cx="348" cy="755.7" r="2.700" fill="#3d4656"/><rect x="345.5" y="938.0999999999999" width="5" height="6" fill="#f0f1f3" transform="rotate(0 348 947.8)"/><rect x="345.5" y="938.0999999999999" width="5" height="6" fill="#f0f1f3" transform="rotate(45 348 947.8)"/><rect x="345.5" y="938.0999999999999" width="5" height="6" fill="#f0f1f3" transform="rotate(90 348 947.8)"/><rect x="345.5" y="938.0999999999999" width="5" height="6" fill="#f0f1f3" transform="rotate(135 348 947.8)"/><rect x="345.5" y="938.0999999999999" width="5" height="6" fill="#f0f1f3" transform="rotate(180 348 947.8)"/><rect x="345.5" y="938.0999999999999" width="5" height="6" fill="#f0f1f3" transform="rotate(225 348 947.8)"/><rect x="345.5" y="938.0999999999999" width="5" height="6" fill="#f0f1f3" transform="rotate(270 348 947.8)"/><rect x="345.5" y="938.0999999999999" width="5" height="6" fill="#f0f1f3" transform="rotate(315 348 947.8)"/><circle cx="348" cy="947.8" r="6.199999999999999" fill="#f0f1f3"/><circle cx="348" cy="947.8" r="2.700" fill="#3d4656"/><rect x="345.5" y="1081.8999999999999" width="5" height="6" fill="#f0f1f3" transform="rotate(0 348 1091.6)"/><rect x="345.5" y="1081.8999999999999" width="5" height="6" fill="#f0f1f3" transform="rotate(45 348 1091.6)"/><rect x="345.5" y="1081.8999999999999" width="5" height="6" fill="#f0f1f3" transform="rotate(90 348 1091.6)"/><rect x="345.5" y="1081.8999999999999" width="5" height="6" fill="#f0f1f3" transform="rotate(135 348 1091.6)"/><rect x="345.5" y="1081.8999999999999" width="5" height="6" fill="#f0f1f3" transform="rotate(180 348 1091.6)"/><rect x="345.5" y="1081.8999999999999" width="5" height="6" fill="#f0f1f3" transform="rotate(225 348 1091.6)"/><rect x="345.5" y="1081.8999999999999" width="5" height="6" fill="#f0f1f3" transform="rotate(270 348 1091.6)"/><rect x="345.5" y="1081.8999999999999" width="5" height="6" fill="#f0f1f3" transform="rotate(315 348 1091.6)"/><circle cx="348" cy="1091.6" r="6.199999999999999" fill="#f0f1f3"/><circle cx="348" cy="1091.6" r="2.700" fill="#3d4656"/><rect x="345.5" y="1226.1" width="5" height="6" fill="#f0f1f3" transform="rotate(0 348 1235.8)"/><rect x="345.5" y="1226.1" width="5" height="6" fill="#f0f1f3" transform="rotate(45 348 1235.8)"/><rect x="345.5" y="1226.1" width="5" height="6" fill="#f0f1f3" transform="rotate(90 348 1235.8)"/><rect x="345.5" y="1226.1" width="5" height="6" fill="#f0f1f3" transform="rotate(135 348 1235.8)"/><rect x="345.5" y="1226.1" width="5" height="6" fill="#f0f1f3" transform="rotate(180 348 1235.8)"/><rect x="345.5" y="1226.1" width="5" height="6" fill="#f0f1f3" transform="rotate(225 348 1235.8)"/><rect x="345.5" y="1226.1" width="5" height="6" fill="#f0f1f3" transform="rotate(270 348 1235.8)"/><rect x="345.5" y="1226.1" width="5" height="6" fill="#f0f1f3" transform="rotate(315 348 1235.8)"/><circle cx="348" cy="1235.8" r="6.199999999999999" fill="#f0f1f3"/><circle cx="348" cy="1235.8" r="2.700" fill="#3d4656"/><rect x="345.5" y="1369.7" width="5" height="6" fill="#f0f1f3" transform="rotate(0 348 1379.4)"/><rect x="345.5" y="1369.7" width="5" height="6" fill="#f0f1f3" transform="rotate(45 348 1379.4)"/><rect x="345.5" y="1369.7" width="5" height="6" fill="#f0f1f3" transform="rotate(90 348 1379.4)"/><rect x="345.5" y="1369.7" width="5" height="6" fill="#f0f1f3" transform="rotate(135 348 1379.4)"/><rect x="345.5" y="1369.7" width="5" height="6" fill="#f0f1f3" transform="rotate(180 348 1379.4)"/><rect x="345.5" y="1369.7" width="5" height="6" fill="#f0f1f3" transform="rotate(225 348 1379.4)"/><rect x="345.5" y="1369.7" width="5" height="6" fill="#f0f1f3" transform="rotate(270 348 1379.4)"/><rect x="345.5" y="1369.7" width="5" height="6" fill="#f0f1f3" transform="rotate(315 348 1379.4)"/><circle cx="348" cy="1379.4" r="6.199999999999999" fill="#f0f1f3"/><circle cx="348" cy="1379.4" r="2.700" fill="#3d4656"/><rect x="345.5" y="1513.7" width="5" height="6" fill="#f0f1f3" transform="rotate(0 348 1523.4)"/><rect x="345.5" y="1513.7" width="5" height="6" fill="#f0f1f3" transform="rotate(45 348 1523.4)"/><rect x="345.5" y="1513.7" width="5" height="6" fill="#f0f1f3" transform="rotate(90 348 1523.4)"/><rect x="345.5" y="1513.7" width="5" height="6" fill="#f0f1f3" transform="rotate(135 348 1523.4)"/><rect x="345.5" y="1513.7" width="5" height="6" fill="#f0f1f3" transform="rotate(180 348 1523.4)"/><rect x="345.5" y="1513.7" width="5" height="6" fill="#f0f1f3" transform="rotate(225 348 1523.4)"/><rect x="345.5" y="1513.7" width="5" height="6" fill="#f0f1f3" transform="rotate(270 348 1523.4)"/><rect x="345.5" y="1513.7" width="5" height="6" fill="#f0f1f3" transform="rotate(315 348 1523.4)"/><circle cx="348" cy="1523.4" r="6.199999999999999" fill="#f0f1f3"/><circle cx="348" cy="1523.4" r="2.700" fill="#3d4656"/><rect x="345.5" y="1657.6" width="5" height="6" fill="#f0f1f3" transform="rotate(0 348 1667.3)"/><rect x="345.5" y="1657.6" width="5" height="6" fill="#f0f1f3" transform="rotate(45 348 1667.3)"/><rect x="345.5" y="1657.6" width="5" height="6" fill="#f0f1f3" transform="rotate(90 348 1667.3)"/><rect x="345.5" y="1657.6" width="5" height="6" fill="#f0f1f3" transform="rotate(135 348 1667.3)"/><rect x="345.5" y="1657.6" width="5" height="6" fill="#f0f1f3" transform="rotate(180 348 1667.3)"/><rect x="345.5" y="1657.6" width="5" height="6" fill="#f0f1f3" transform="rotate(225 348 1667.3)"/><rect x="345.5" y="1657.6" width="5" height="6" fill="#f0f1f3" transform="rotate(270 348 1667.3)"/><rect x="345.5" y="1657.6" width="5" height="6" fill="#f0f1f3" transform="rotate(315 348 1667.3)"/><circle cx="348" cy="1667.3" r="6.199999999999999" fill="#f0f1f3"/><circle cx="348" cy="1667.3" r="2.700" fill="#3d4656"/><g transform="translate(20.0 258.0)"><path d="M7.500 56.500L56.500 8" stroke="#dcdcdc" stroke-width="2.600"/><rect x="-0.1" y="57.7" width="6.8" height="6.8" fill="#8ec6fa"/><rect x="57.7" y="-0.3" width="6.8" height="6.8" fill="#8ec6fa"/></g><g transform="translate(108.0 258.0)"><path d="M7 46.800H40" stroke="#dcdcdc" stroke-width="2.600"/><path d="M47 17C58 17.500 63.500 24 63.500 32S58 46.300 47 46.800" stroke="#dcdcdc" stroke-width="2.600"/><rect x="0.1" y="43.6" width="6.4" height="6.4" fill="#8ec6fa"/><rect x="39.8" y="43.6" width="6.4" height="6.4" fill="#8ec6fa"/><rect x="39.8" y="13.8" width="6.4" height="6.4" fill="#8ec6fa"/></g><g transform="translate(196.0 258.0)"><circle cx="32" cy="32" r="30" stroke="#dcdcdc" stroke-width="2.600"/><path d="M35 29L46 18" stroke="#8ec6fa" stroke-width="2.800"/><path d="M52.0 12.0L48.8 21.5L42.5 15.2Z" fill="#8ec6fa"/><rect x="28.8" y="28.8" width="6.4" height="6.4" fill="#8ec6fa"/></g><g transform="translate(284.0 258.0)"><path d="M7 11H61V49M57 53H3V15" stroke="#dcdcdc" stroke-width="2.600"/><rect x="-0.2" y="7.8" width="6.4" height="6.4" fill="#8ec6fa"/><rect x="57.8" y="49.8" width="6.4" height="6.4" fill="#8ec6fa"/></g><g transform="translate(12.0 342.0)"><path d="M6 29C6.500 17 16 6.500 30 5" stroke="#dcdcdc" stroke-width="2.400" stroke-dasharray="6.500 3.500" stroke-dashoffset="-2"/><rect x="3.4" y="27.3" width="5" height="5" fill="#8ec6fa"/><rect x="10.3" y="10.5" width="5" height="5" fill="#8ec6fa"/><rect x="27.5" y="2.5" width="5" height="5" fill="#8ec6fa"/></g><g transform="translate(56.0 342.0)"><path d="M3.700 31.700C4 22 6 15 9.800 11.900C14 9 20 24 25.900 23.600C29 23 31 12 31.800 3.900" stroke="#dcdcdc" stroke-width="2.400" stroke-dasharray="8 3.500"/><rect x="1.2" y="29.2" width="5" height="5" fill="#8ec6fa"/><rect x="7.3" y="9.4" width="5" height="5" fill="#8ec6fa"/><rect x="23.4" y="21.1" width="5" height="5" fill="#8ec6fa"/><rect x="29.3" y="1.4" width="5" height="5" fill="#8ec6fa"/></g><g transform="translate(100.0 342.0)"><path d="M8.500 9.900H28M8.500 25.900H28" stroke="#dcdcdc" stroke-width="2.400"/><path d="M2 17.900H34" stroke="#4f78ad" stroke-width="4.500"/><path d="M2 17.900H34" stroke="#dcdcdc" stroke-width="2" stroke-dasharray="11 2.500 3 2.500"/></g><g transform="translate(144.0 342.0)"><path d="M6 30L30 6" stroke="#dcdcdc" stroke-width="2.400" stroke-dasharray="7 3.500"/><path d="M33.7 2.0L30.5 11.5L24.2 5.2Z" fill="#dcdcdc"/><path d="M2.4 33.5L5.6 24.0L11.9 30.3Z" fill="#dcdcdc"/><rect x="15.6" y="15.4" width="5" height="5" fill="#8ec6fa"/></g><g transform="translate(188.0 342.0)"><ellipse cx="17.400" cy="17.900" rx="13.500" ry="9.500" stroke="#dcdcdc" stroke-width="2.400" stroke-dasharray="22 4"/><rect x="14.9" y="15.4" width="5" height="5" fill="#8ec6fa"/><rect x="14.9" y="5.9" width="5" height="5" fill="#8ec6fa"/><rect x="28.4" y="15.4" width="5" height="5" fill="#8ec6fa"/></g><g transform="translate(232.0 342.0)"><path d="M5 10C3 7 8 4.500 10 7.500C12 4.500 16 4.500 18 7.500C20 4.500 24 4.500 26 7.500C28 4.500 33 7 31 10C34 12 34 16 31 18C34 20 34 24 31 26C33 29 28 31.500 26 28.500C24 31.500 20 31.500 18 28.500C16 31.500 12 31.500 10 28.500C8 31.500 3 29 5 26C2 24 2 20 5 18C2 16 2 12 5 10Z" stroke="#dcdcdc" stroke-width="2.300"/></g><g transform="translate(276.0 342.0)"><path d="M2.500 2.900L15.500 15.500M32.800 2.900L20.500 15.200M15.500 20.500L3 32.700" stroke="#dcdcdc" stroke-width="2.400"/><rect x="15.5" y="15.4" width="5" height="5" fill="#8ec6fa"/></g><g transform="translate(320.0 342.0)"><path d="M1.900 17.200H11.400L15 6.500L20.900 29.100L25.200 17.200H34" stroke="#dcdcdc" stroke-width="2.400" stroke-linejoin="miter"/></g><g transform="translate(270.5 332.0)"><path d="M0 -8.500V0H-8.500Z" fill="#9a9da3"/></g><g transform="translate(358.5 332.0)"><path d="M0 -8.500V0H-8.500Z" fill="#9a9da3"/></g><g transform="translate(52.0 381.5)"><path d="M0 -8.500V0H-8.500Z" fill="#9a9da3"/></g><g transform="translate(96.0 381.5)"><path d="M0 -8.500V0H-8.500Z" fill="#9a9da3"/></g><g transform="translate(140.0 381.5)"><path d="M0 -8.500V0H-8.500Z" fill="#9a9da3"/></g><g transform="translate(184.0 381.5)"><path d="M0 -8.500V0H-8.500Z" fill="#9a9da3"/></g><g transform="translate(228.0 381.5)"><path d="M0 -8.500V0H-8.500Z" fill="#9a9da3"/></g><g transform="translate(272.0 381.5)"><path d="M0 -8.500V0H-8.500Z" fill="#9a9da3"/></g><g transform="translate(316.0 381.5)"><path d="M0 -8.500V0H-8.500Z" fill="#9a9da3"/></g><g transform="translate(20.0 450.0)"><clipPath id="hclip"><rect x="12.500" y="12.500" width="39.400" height="39.400"/></clipPath><rect x="12" y="12" width="40.400" height="40.400" fill="#2d4566"/><g stroke="#8ec6fa" stroke-width="2.200" clip-path="url(#hclip)"><path d="M12 15.4L15.4 12"/><path d="M12 24.6L24.6 12"/><path d="M12 33.8L33.8 12"/><path d="M12 43.0L43.0 12"/><path d="M12.0 52.200L52.200 12.0"/><path d="M21.2 52.200L52.200 21.2"/><path d="M30.4 52.200L52.200 30.4"/><path d="M39.6 52.200L52.200 39.6"/><path d="M48.8 52.200L52.200 48.8"/></g><path d="M8.700 0V63.600M55 0V63.600M0 9H64.200M0 55.200H64.200" stroke="#dcdcdc" stroke-width="2.600"/></g><g transform="translate(108.0 450.0)"><rect x="12" y="12" width="40.400" height="40.400" fill="#2d4566"/><g stroke="#8ec6fa" stroke-width="2.200" clip-path="url(#hclip)"><path d="M12 15.4L15.4 12"/><path d="M12 24.6L24.6 12"/><path d="M12 33.8L33.8 12"/><path d="M12 43.0L43.0 12"/><path d="M12.0 52.200L52.200 12.0"/><path d="M21.2 52.200L52.200 21.2"/><path d="M30.4 52.200L52.200 30.4"/><path d="M39.6 52.200L52.200 39.6"/><path d="M48.8 52.200L52.200 48.8"/></g><path d="M8.700 0V63.600M55 0V63.600M0 9H64.200M0 55.200H64.200" stroke="#dcdcdc" stroke-width="2.600"/><path d="M19.500 10H44.500L42 4.500Q41.500 2.500 39.500 2.500H24.500Q22.500 2.500 22 4.500Z" fill="#ffffff" stroke="#3d4656" stroke-width="1"/></g><g transform="translate(196.0 450.0)"><linearGradient id="gfill" x1="0" y1="0" x2="0" y2="1"><stop offset="0.100" stop-color="#8ec6fa"/><stop offset="0.500" stop-color="#7b8ea8"/><stop offset="1" stop-color="#424858"/></linearGradient><rect x="12" y="12" width="40.400" height="40.400" fill="url(#gfill)"/><path d="M8.700 0V63.600M55 0V63.600M0 9H64.200M0 55.200H64.200" stroke="#dcdcdc" stroke-width="2.600"/></g><g transform="translate(276.0 442.0)"><path d="M7 1.700V34M29.200 1.700V34M2 7.500H34M2 29H34" stroke="#7ab8f4" stroke-width="2.300"/></g><g transform="translate(320.0 442.0)"><path d="M2 5H21.600L34 17V30.500H2Z" fill="#dcdcdc"/><circle cx="16.800" cy="17.700" r="4.600" fill="#3a404c"/></g><g transform="translate(276.0 486.0)"><clipPath id="hclip2"><rect x="2" y="2" width="32" height="32.200"/></clipPath><rect x="2" y="2" width="32" height="32.200" fill="#5a606c"/><g stroke="#dcdcdc" stroke-width="2.400" clip-path="url(#hclip2)"><path d="M-34 36L2 0"/><path d="M-28 36L8 0"/><path d="M-22 36L14 0"/><path d="M-16 36L20 0"/><path d="M-10 36L26 0"/><path d="M-4 36L32 0"/><path d="M2 36L38 0"/><path d="M8 36L44 0"/><path d="M14 36L50 0"/><path d="M20 36L56 0"/><path d="M26 36L62 0"/><path d="M32 36L68 0"/><path d="M38 36L74 0"/><path d="M44 36L80 0"/></g><path d="M8 10H20.400V16.700H27.700V26H8Z" fill="#8ec6fa" stroke="#2d3542" stroke-width="2"/></g><g transform="translate(182.5 524.0)"><path d="M0 -8.500V0H-8.500Z" fill="#9a9da3"/></g><g transform="translate(20.0 595.0)"><rect x="2.6" y="23.6" width="36.4" height="28.4" fill="#747985" stroke="#dcdcdc" stroke-width="2.4"/><circle cx="39" cy="50.3" r="12.4" fill="#747985" fill-opacity="0.850" stroke="#dcdcdc" stroke-width="2.4"/><path d="M39 52H39V50.3" stroke="#dcdcdc" stroke-width="2.4" fill="none" opacity="0.550"/><rect x="0" y="49.8" width="5.800" height="5.400" fill="#dcdcdc"/><polygon points="49.7,-1.3 51.1,8.0 59.4,3.6 55.0,11.9 64.3,13.3 55.9,17.4 62.6,23.9 53.4,22.4 54.9,31.6 48.4,24.9 44.3,33.3 42.9,24.0 34.6,28.4 39.0,20.1 29.7,18.7 38.1,14.6 31.4,8.1 40.6,9.6 39.1,0.4 45.6,7.1" fill="#f6cf74" stroke="#3d4656" stroke-width="1.200"/></g><g transform="translate(108.0 595.0)"><path d="M29.700 1H51.500L61.700 11V44.700H29.700Z" fill="#8ec6fa"/><path d="M51.500 1V11H61.700Z" fill="#c4e0fb" stroke="#3d4656" stroke-width="1.300"/><rect x="4.2" y="19.2" width="37.5" height="27.7" fill="#747985" stroke="#dcdcdc" stroke-width="2.4"/><circle cx="40.9" cy="46.2" r="14.5" fill="#747985" fill-opacity="0.850" stroke="#dcdcdc" stroke-width="2.4"/><path d="M40.9 46.9H41.7V46.2" stroke="#dcdcdc" stroke-width="2.4" fill="none" opacity="0.550"/><rect x="2" y="43.3" width="5.800" height="5.400" fill="#dcdcdc"/></g><g transform="translate(196.0 595.0)"><rect x="4.3" y="17.3" width="40.7" height="31.1" fill="#747985" stroke="#dcdcdc" stroke-width="2.4"/><circle cx="45" cy="46.2" r="12.7" fill="#747985" fill-opacity="0.850" stroke="#dcdcdc" stroke-width="2.4"/><path d="M45 48.4H45V46.2" stroke="#dcdcdc" stroke-width="2.4" fill="none" opacity="0.550"/><rect x="2" y="45.5" width="5.800" height="5.400" fill="#dcdcdc"/><g transform="translate(29.0 35.3) rotate(-44.3)"><path d="M-1 0L10.8 -7.5H41.80306361046925V7.5H10.8Z" fill="#3d4656"/><path d="M0 0L10.8 -6.0V6.0Z" fill="#e6e6e6" stroke="#3a3f4a" stroke-width="1.200"/><rect x="10.8" y="-6.0" width="21.6" height="12" fill="#f6cf74"/><path d="M32.4 -6.0H36.6A6.0 6.0 0 0 1 36.6 6.0H32.4Z" fill="#e8645a"/></g></g><g transform="translate(284.0 595.0)"><polygon points="0.0,3.2 27.7,3.2 59.8,35.3 32.0,62.2 0.0,30.2" fill="#dcdcdc"/><circle cx="11.7" cy="14.9" r="4" fill="#3a404c"/><g stroke="#555a64" stroke-width="2.400"><path d="M15 27L21 21M19 34L31 22M24 42L40 26M30 47L46 31" stroke-dasharray="5 2.500"/></g><g transform="translate(30.6 31.6) rotate(-44.2)"><path d="M-1 0L10.8 -7.5H41.7332787779231V7.5H10.8Z" fill="#3d4656"/><path d="M0 0L10.8 -6.0V6.0Z" fill="#e6e6e6" stroke="#3a3f4a" stroke-width="1.200"/><rect x="10.8" y="-6.0" width="21.5" height="12" fill="#f6cf74"/><path d="M32.3 -6.0H36.5A6.0 6.0 0 0 1 36.5 6.0H32.3Z" fill="#e8645a"/></g></g><g transform="translate(12.0 677.8)"><polygon points="3.3,3.2 16.4,3.2 32.4,19.5 19.3,32.6 3.3,16.5" fill="#dcdcdc"/><circle cx="9.6" cy="9.2" r="2" fill="#3a404c"/><g stroke="#555a64" stroke-width="2.200"><path d="M11 15.500L13.500 13M13.500 20.500L19 15M17.500 25L24.500 18"/></g></g><g transform="translate(56.0 677.8)"><g transform="translate(0 0)"><rect x="3" y="12.900" width="16.700" height="14.600" fill="#747985" stroke="#dcdcdc" stroke-width="2"/><circle cx="22" cy="27.200" r="6" fill="#747985" stroke="#dcdcdc" stroke-width="2"/><path d="M22 21V27.200H28" stroke="#dcdcdc" stroke-width="1.600"/><rect x="1.500" y="25.500" width="4" height="4" fill="#dcdcdc"/></g><rect x="16.100" y="2.700" width="17.500" height="15.300" fill="#f8f8f8"/><rect x="16.100" y="2.700" width="17.500" height="3.600" fill="#8a8e96"/><path d="M19 10H21.500M23.500 10H31M19 14.500H21.500M23.500 14.500H31" stroke="#3a424f" stroke-width="2"/></g><g transform="translate(100.0 677.8)"><g transform="translate(0 0)"><rect x="3" y="12.900" width="16.700" height="14.600" fill="#747985" stroke="#dcdcdc" stroke-width="2"/><circle cx="22" cy="27.200" r="6" fill="#747985" stroke="#dcdcdc" stroke-width="2"/><path d="M22 21V27.200H28" stroke="#dcdcdc" stroke-width="1.600"/><rect x="1.500" y="25.500" width="4" height="4" fill="#dcdcdc"/></g><rect x="18.300" y="2.400" width="15.700" height="15.600" fill="#b9bcc0"/><rect x="21.500" y="2.400" width="9.500" height="5.500" fill="#f4f4f4"/><rect x="21" y="12.500" width="10" height="5.500" fill="#f4f4f4"/><rect x="22.500" y="14" width="1.800" height="3" fill="#333a46"/></g><g transform="translate(144.0 677.8)"><rect x="2.400" y="2.700" width="26.900" height="27" fill="#747985" stroke="#dcdcdc" stroke-width="2.200"/><path d="M27.900 20.500V35M20.700 27.800H35" stroke="#3d4656" stroke-width="7"/><path d="M27.900 21.500V34M21.600 27.800H34.200" stroke="#6fb0f2" stroke-width="4"/></g><g transform="translate(188.0 677.8)"><polygon points="2.0,3.2 15.0,3.2 31.0,19.5 18.0,32.6 2.0,16.5" fill="#dcdcdc"/><circle cx="8.3" cy="9.2" r="2" fill="#3a404c"/><g transform="translate(-1.300 0)"><g stroke="#555a64" stroke-width="2.200"><path d="M11 15.500L13.500 13M13.500 20.500L19 15M17.500 25L24.500 18"/></g></g><circle cx="25.400" cy="10.700" r="10.500" fill="#3d4656"/><g fill="none" stroke="#5dc474" stroke-width="2.8"><path d="M18.8 10.7A6.6 6.6 0 0 1 30.0 6.1"/><path d="M32.0 10.7A6.6 6.6 0 0 1 20.8 15.3"/></g><path d="M32.3 9.4L27.8 4.8L35.0 3.5Z" fill="#5dc474"/><path d="M18.5 12.0L23.0 16.6L15.8 17.9Z" fill="#5dc474"/></g><g transform="translate(232.0 677.8)"><polygon points="2.0,3.2 15.0,3.2 31.0,19.5 18.0,32.6 2.0,16.5" fill="#dcdcdc"/><circle cx="8.3" cy="9.2" r="2" fill="#3a404c"/><g transform="translate(-1.300 0)"><g stroke="#555a64" stroke-width="2.200"><path d="M11 15.500L13.500 13M13.500 20.500L19 15M17.500 25L24.500 18"/></g></g><rect x="16.500" y="1.500" width="18.500" height="18.500" fill="#3d4656"/><rect x="20.300" y="5.200" width="11" height="11" fill="#7ab0ea"/><rect x="18" y="3" width="15.600" height="15.600" fill="none" stroke="#5d8fd0" stroke-width="2.400" stroke-dasharray="9 6.600" stroke-dashoffset="-3.300"/></g><g transform="translate(276.0 677.8)"><rect x="4" y="3" width="14" height="9.500" fill="#747985" stroke="#dcdcdc" stroke-width="2"/><circle cx="19" cy="12" r="4.500" fill="#8d919a" stroke="#dcdcdc" stroke-width="1.800"/><rect x="2.500" y="10.500" width="3.500" height="3.500" fill="#dcdcdc"/><path d="M27 8H33.500V15" stroke="#ffffff" stroke-width="2.400"/><path d="M23.5 8.0L28.5 4.4L28.5 11.6Z" fill="#ffffff"/><rect x="13" y="20" width="15" height="11" fill="#5676a3" stroke="#8ec6fa" stroke-width="2"/><circle cx="29" cy="29.500" r="5" fill="#5676a3" stroke="#8ec6fa" stroke-width="2"/><rect x="11" y="29" width="3.500" height="3.500" fill="#8ec6fa"/></g><g transform="translate(358.5 668.5)"><path d="M0 -8.500V0H-8.500Z" fill="#9a9da3"/></g><g transform="translate(20.0 786.0)"><path d="M32 0L42 15H34.500V29.500H49V22L64 32L49 42V34.500H34.500V49H42L32 64L22 49H29.500V34.500H15V42L0 32L15 22V29.500H29.500V15H22Z" fill="#ffffff"/></g><g transform="translate(196.0 786.0)"><path d="M0 4.800H32" stroke="#8ec6fa" stroke-width="2.400" stroke-dasharray="8 4"/><path d="M48 4.800H64" stroke="#dcdcdc" stroke-width="2.400"/><path d="M36.500 1L44 9V35L39.500 41Z" fill="#ffffff"/><path d="M16 13L22 11L45.500 37L38 41.500Z" fill="#ffffff"/><ellipse cx="35" cy="52" rx="6" ry="9" transform="rotate(18 35 52)" stroke="#ffffff" stroke-width="4.600"/><ellipse cx="51.500" cy="45.500" rx="6" ry="9" transform="rotate(-52 51.500 45.500)" stroke="#ffffff" stroke-width="4.600"/><circle cx="39.500" cy="38" r="2.200" fill="#3d4656"/></g><g transform="translate(100.0 778.0)"><circle cx="9" cy="9.200" r="6" stroke="#dcdcdc" stroke-width="2.300"/><path d="M18 5.800H27.500V12" stroke="#ffffff" stroke-width="2.400"/><path d="M27.5 17.5L23.5 11.5L31.5 11.5Z" fill="#ffffff"/><circle cx="16.500" cy="27" r="6" stroke="#8ec6fa" stroke-width="2.400"/><path d="M25.200 22.300A6 6 0 1 1 25.200 31.700" stroke="#8ec6fa" stroke-width="2.400"/></g><g transform="translate(144.0 778.0)"><path d="M20.500 6.400A13.500 13.500 0 1 0 31.300 17.500" stroke="#ffffff" stroke-width="2.400"/><path d="M27.5 6.2L19.0 11.4L19.0 1.0Z" fill="#ffffff"/></g><g transform="translate(276.0 778.0)"><path d="M3 21A17.500 17.500 0 0 1 19.700 3" stroke="#8ec6fa" stroke-width="2.400"/><path d="M3 22.500V33.500M22.600 3H33.500" stroke="#dcdcdc" stroke-width="2.400"/></g><g transform="translate(320.0 778.0)"><rect x="3.700" y="4" width="12.500" height="11.600" fill="#dcdcdc"/><rect x="20.100" y="4" width="12.100" height="11.600" fill="#8ec6fa"/><rect x="3.700" y="20" width="12.500" height="11.600" fill="#8ec6fa"/><rect x="20.100" y="20" width="12.100" height="11.600" fill="#8ec6fa"/></g><g transform="translate(100.0 822.0)"><path d="M5.500 30.200H15.400V8.500Z" stroke="#dcdcdc" stroke-width="2.200"/><path d="M30.500 30.200H20.800V8.500Z" stroke="#8ec6fa" stroke-width="2.200"/></g><g transform="translate(144.0 822.0)"><path d="M3.900 4H24.200V14M3.900 4V23.700H16" stroke="#ffffff" stroke-width="1.800" stroke-dasharray="3 2.500"/><rect x="1.6999999999999997" y="1.7999999999999998" width="4.400" height="4.400" fill="#ffffff"/><rect x="11.8" y="1.7999999999999998" width="4.400" height="4.400" fill="#ffffff"/><rect x="22.0" y="1.7999999999999998" width="4.400" height="4.400" fill="#ffffff"/><rect x="1.6999999999999997" y="11.600000000000001" width="4.400" height="4.400" fill="#ffffff"/><rect x="1.6999999999999997" y="21.5" width="4.400" height="4.400" fill="#ffffff"/><rect x="11.8" y="21.5" width="4.400" height="4.400" fill="#ffffff"/><rect x="11.8" y="11.600000000000001" width="4.400" height="4.400" fill="#ffffff"/><path d="M19.500 14.500V35L24.500 30.500L34 29Z" fill="#ffffff"/><path d="M28 12.800H34M31 9.800V15.800" stroke="#ffffff" stroke-width="2"/></g><g transform="translate(276.0 822.0)"><path d="M33.500 6.300H15.300A11.250 11.250 0 0 0 15.300 28.800H33.500" stroke="#8ec6fa" stroke-width="2.400"/><path d="M33.500 11.800H15.800A5.850 5.850 0 0 0 15.800 23.500H33.500" stroke="#dcdcdc" stroke-width="2.400"/></g><g transform="translate(320.0 822.0)"><rect x="6.300" y="15" width="18.900" height="16.300" stroke="#dcdcdc" stroke-width="2.400"/><path d="M6.300 12.800L15 4.800H34L25.200 12.800Z" stroke="#8ec6fa" stroke-width="2.200"/><path d="M27.400 14.300L34.700 7V23L27.400 30Z" stroke="#8ec6fa" stroke-width="2.200"/><path d="M2.700 14V31.500" stroke="#8ec6fa" stroke-width="2.200"/></g><g transform="translate(12.0 870.0)"><path d="M15 21V2.700H2.700V33.300H15V30" stroke="#dcdcdc" stroke-width="2.200"/><path d="M19.300 2.700H23.700L33.200 33.300H19.300" stroke="#8ec6fa" stroke-width="2.200"/><path d="M10.600 25.300H18" stroke="#ffffff" stroke-width="2.600"/><path d="M24.5 25.3L17.5 29.8L17.5 20.8Z" fill="#ffffff"/></g><g transform="translate(56.0 870.0)"><linearGradient id="cubeg" x1="0" y1="0" x2="1" y2="1"><stop offset="0" stop-color="#f2f2f2"/><stop offset="1" stop-color="#bcbcbc"/></linearGradient><path d="M2.300 5L5.500 2H19.700V16.400L16.500 19.400H2.300Z" fill="url(#cubeg)"/><rect x="2.300" y="5" width="14.200" height="14.400" fill="#e4e4e4"/><rect x="20.500" y="20.200" width="13.100" height="13.100" fill="#8ec6fa"/><path d="M5.500 23V28.500H11" stroke="#ffffff" stroke-width="2.400"/><path d="M16.0 28.5L10.5 32.3L10.5 24.7Z" fill="#ffffff"/></g><g transform="translate(100.0 870.0)"><path d="M2.700 14V2.700H33.300V33.300H22.400" stroke="#8ec6fa" stroke-width="2.400"/><rect x="2.700" y="16.500" width="16.700" height="16.800" stroke="#dcdcdc" stroke-width="2.400"/></g><g transform="translate(144.0 870.0)"><path d="M2.400 33.300L33.700 2.700" stroke="#dcdcdc" stroke-width="2.400"/><path d="M11.900 12.200L23.500 23.800" stroke="#8ec6fa" stroke-width="2.600"/></g><g transform="translate(188.0 870.0)"><path d="M2.100 17.700H11M34.100 17.700H25" stroke="#dcdcdc" stroke-width="2.400"/><path d="M17.0 17.7L9.0 21.9L9.0 13.5Z" fill="#8ec6fa"/><path d="M18.6 17.7L26.6 13.5L26.6 21.9Z" fill="#8ec6fa"/></g><g transform="translate(232.0 870.0)"><rect x="1.800" y="4.100" width="20.400" height="15.300" fill="#b9bcc0"/><rect x="14.200" y="16.500" width="19.600" height="15.300" fill="#3d4656" stroke="#dcdcdc" stroke-width="2.400"/><path d="M18.500 28.500V21L27.500 28.500Z" fill="#b9bcc0"/><path d="M24.500 5.500H31V11" stroke="#ffffff" stroke-width="2.300"/><path d="M31.0 15.5L27.4 10.5L34.6 10.5Z" fill="#ffffff"/><path d="M11 29.500H5.500V26" stroke="#ffffff" stroke-width="2.300"/><path d="M5.5 21.0L9.1 26.0L1.9 26.0Z" fill="#ffffff"/></g><g transform="translate(276.0 870.0)"><rect x="3" y="2.700" width="17.400" height="13.100" fill="#747985" stroke="#dcdcdc" stroke-width="2"/><circle cx="19.700" cy="15" r="7" fill="#8d919a" fill-opacity="0.700" stroke="#dcdcdc" stroke-width="2.200"/><path d="M6.600 20.200V26H12" stroke="#ffffff" stroke-width="2.400"/><path d="M17.5 26.0L12.0 29.8L12.0 22.2Z" fill="#ffffff"/><circle cx="27.700" cy="28.200" r="5.500" fill="#47587a" stroke="#8ec6fa" stroke-width="2.300"/></g><g transform="translate(320.0 870.0)"><path d="M18 2V21" stroke="#d9ab6e" stroke-width="2.400"/><rect x="15" y="20" width="6" height="3.200" fill="#d9ab6e"/><path d="M15 23.200H21L27.400 33.300H8.500Z" fill="#f6cf74"/></g><g transform="translate(316.0 817.5)"><path d="M0 -8.500V0H-8.500Z" fill="#9a9da3"/></g><g transform="translate(360.0 817.5)"><path d="M0 -8.500V0H-8.500Z" fill="#9a9da3"/></g><g transform="translate(270.0 859.5)"><path d="M0 -8.500V0H-8.500Z" fill="#9a9da3"/></g><g transform="translate(184.0 909.5)"><path d="M0 -8.500V0H-8.500Z" fill="#9a9da3"/></g><g transform="translate(20.0 978.0)"><text x="32" y="60" font-size="78" text-anchor="middle" fill="#dcdcdc" font-family="'Liberation Sans',sans-serif">A</text></g><g transform="translate(108.0 978.0)"><text x="22" y="50" font-size="70" text-anchor="middle" fill="#dcdcdc" font-family="'Liberation Sans',sans-serif">A</text><g transform="translate(63.4 34.7) rotate(140.6)"><rect x="0" y="-3.600" width="16.2" height="7.200" fill="#f4f4f4"/><path d="M17.7 -4.500C24.2 -9 36.0 -6 45.0 2C36.0 7 24.2 8 17.7 4.500Z" fill="#d9ab6e"/></g></g><g transform="translate(188.0 969.5)"><text x="18.300" y="30.100" font-size="38" text-anchor="middle" fill="#dcdcdc" font-family="'Liberation Sans',sans-serif">A</text><path d="M2 33.400H34.300" stroke="#8ec6fa" stroke-width="2.200"/></g><g transform="translate(232.0 969.5)"><text x="18.300" y="13.700" font-size="12.300" font-weight="700" text-anchor="middle" fill="#dcdcdc" letter-spacing="0.600" font-family="'Liberation Sans',sans-serif">ABC</text><path d="M8.200 27.100L15.300 32.500L26.900 19.100" stroke="#74d083" stroke-width="4.200"/></g><g transform="translate(276.0 969.5)"><rect x="10.600" y="25.900" width="23.200" height="8" fill="#dcdcdc"/><rect x="10.600" y="16.400" width="23.200" height="7.100" fill="#8ec6fa"/><rect x="2.200" y="2.600" width="17.800" height="17.400" fill="#f6f8fb" stroke="#3d4656" stroke-width="1"/><path d="M5.500 7.500H7.500M9.500 7.500H16.500M5.500 11.500H7.500M9.500 11.500H16.500M5.500 15.500H7.500M9.500 15.500H16.500" stroke="#4d82c8" stroke-width="1.900"/><text x="27" y="14.100" font-size="17" font-weight="700" text-anchor="middle" fill="#6fb0f2" font-family="'Liberation Sans',sans-serif">A</text></g><g transform="translate(320.0 969.5)"><text x="3" y="12.300" font-size="11.800" font-weight="700" fill="#dcdcdc" letter-spacing="0.700" font-family="'Liberation Sans',sans-serif">PDF</text><path d="M6.400 16.500V24.400H11" stroke="#ffffff" stroke-width="2.200"/><path d="M15.5 24.4L10.5 27.9L10.5 20.9Z" fill="#ffffff"/><text x="25.500" y="32.800" font-size="23" text-anchor="middle" fill="#6fb0f2" stroke="#6fb0f2" stroke-width="0.600" font-family="'Liberation Sans',sans-serif">A</text></g><g transform="translate(188.0 1014.0)"><rect x="2.200" y="2.300" width="21.400" height="23.200" fill="#dcdcdc"/><path d="M6 8H20M6 12.500H20M6 17H20" stroke="#5a5f69" stroke-width="2"/><path d="M25.500 4.500H30.500V9" stroke="#ffffff" stroke-width="2.200"/><path d="M30.5 14.0L26.9 9.0L34.1 9.0Z" fill="#ffffff"/><text x="25.400" y="33.800" font-size="25" text-anchor="middle" fill="#ffffff" stroke="#3d4656" stroke-width="3" paint-order="stroke" font-family="'Liberation Sans',sans-serif">A</text></g><g transform="translate(232.0 1014.0)"><path d="M25 26.300L33.200 33.100" stroke="#d9ab6e" stroke-width="3"/><circle cx="15.300" cy="16.500" r="12.200" stroke="#ffffff" stroke-width="2.200" fill="#3d4656"/><text x="15.300" y="22.500" font-size="17" text-anchor="middle" fill="#dcdcdc" font-family="'Liberation Sans',sans-serif">A</text></g><g transform="translate(276.0 1014.0)"><rect x="2.200" y="26" width="23.600" height="7.500" fill="#dcdcdc"/><rect x="2.200" y="16.200" width="23.600" height="7.500" fill="#8ec6fa"/><text x="9.300" y="13.500" font-size="17" font-weight="700" text-anchor="middle" fill="#6fb0f2" font-family="'Liberation Sans',sans-serif">A</text><g fill="none" stroke="#5dc474" stroke-width="2.8"><path d="M19.6 8.9A6.2 6.2 0 0 1 30.1 4.6"/><path d="M32.0 8.9A6.2 6.2 0 0 1 21.5 13.2"/></g><path d="M32.3 7.7L28.1 3.4L34.8 2.2Z" fill="#5dc474"/><path d="M19.3 10.1L23.5 14.4L16.8 15.6Z" fill="#5dc474"/></g><g transform="translate(320.0 1014.0)"><text x="1.500" y="9.600" font-size="11.800" font-weight="700" fill="#dcdcdc" letter-spacing="0.700" font-family="'Liberation Sans',sans-serif">PDF</text><path d="M4.600 14.500V22.800H9" stroke="#ffffff" stroke-width="2.200"/><path d="M13.5 22.8L8.5 26.3L8.5 19.3Z" fill="#ffffff"/><text x="22.500" y="30" font-size="19" text-anchor="middle" fill="#dcdcdc" font-style="italic" font-family="'Liberation Sans',sans-serif">A</text><path d="M19.500 33.500L31 21.500" stroke="#6fb0f2" stroke-width="3.200"/><path d="M28.500 17.500A4.500 4.500 0 1 0 34.500 23" stroke="#6fb0f2" stroke-width="2.800"/></g><g transform="translate(20.0 1122.0)"><path d="M1 0V64M63 0V64" stroke="#dcdcdc" stroke-width="2.400"/><path d="M11.2 13H53" stroke="#dcdcdc" stroke-width="2.4"/><path d="M3.2 13.0L12.2 8.5L12.2 17.5Z" fill="#dcdcdc"/><path d="M61.0 13.0L52.0 17.5L52.0 8.5Z" fill="#dcdcdc"/><path transform="translate(31.800 57.600) rotate(-90)" d="M8 0Q16.5 -4.500 25 -1.500L25 1.500Q16.5 4.500 8 0Z" fill="#f6cf74"/><path transform="translate(31.800 57.600) rotate(-135)" d="M9 0Q17.0 -4.500 25 -1.500L25 1.500Q17.0 4.500 9 0Z" fill="#f6cf74"/><path transform="translate(31.800 57.600) rotate(-45)" d="M9 0Q17.0 -4.500 25 -1.500L25 1.500Q17.0 4.500 9 0Z" fill="#f6cf74"/><path transform="translate(31.800 57.600) rotate(180)" d="M10 0Q18.0 -4.500 26 -1.500L26 1.500Q18.0 4.500 10 0Z" fill="#f6cf74"/><path transform="translate(31.800 57.600) rotate(0)" d="M10 0Q18.0 -4.500 26 -1.500L26 1.500Q18.0 4.500 10 0Z" fill="#f6cf74"/></g><g transform="translate(108.0 1122.0)"><path d="M1 23.400V56.800M63 23.400V56.800" stroke="#dcdcdc" stroke-width="2.400"/><path d="M11.2 40.7H53" stroke="#dcdcdc" stroke-width="2.4"/><path d="M3.2 40.7L12.2 36.2L12.2 45.2Z" fill="#dcdcdc"/><path d="M61.0 40.7L52.0 45.2L52.0 36.2Z" fill="#dcdcdc"/><g transform="translate(63.4 7.6) rotate(140.6)"><rect x="0" y="-3.600" width="16.2" height="7.200" fill="#f4f4f4"/><path d="M17.7 -4.500C24.2 -9 36.0 -6 45.0 2C36.0 7 24.2 8 17.7 4.500Z" fill="#d9ab6e"/></g></g><g transform="translate(188.0 1113.0)"><path d="M3 5V32.700M33.400 5V32.700" stroke="#dcdcdc" stroke-width="2.200"/><path d="M10.0 14H26.5" stroke="#8ec6fa" stroke-width="2.2"/><path d="M4.5 14.0L11.0 10.7L11.0 17.3Z" fill="#8ec6fa"/><path d="M32.0 14.0L25.5 17.3L25.5 10.7Z" fill="#8ec6fa"/></g><g transform="translate(232.0 1113.0)"><circle cx="17.600" cy="19" r="14.300" stroke="#dcdcdc" stroke-width="2.200"/><path d="M12.600 19H22.600M17.600 14V24" stroke="#8ec6fa" stroke-width="2.300"/></g><g transform="translate(276.0 1113.0)"><path d="M15 3.300V27" stroke="#dcdcdc" stroke-width="2"/><path d="M15.0 32.5L11.0 25.5L19.0 25.5Z" fill="#dcdcdc"/><path d="M8 34H22" stroke="#dcdcdc" stroke-width="2"/><path d="M2.600 15.800H11.500M18.600 15.800H25" stroke="#8ec6fa" stroke-width="2.400"/><path d="M31.5 15.8L24.0 20.0L24.0 11.6Z" fill="#8ec6fa"/><path d="M32.600 9.500V22.900" stroke="#dcdcdc" stroke-width="2"/></g><g transform="translate(320.0 1113.0)"><path d="M7.300000000000001 6.8H28.6" stroke="#dcdcdc" stroke-width="2"/><path d="M2.3 6.8L8.3 3.5L8.3 10.1Z" fill="#dcdcdc"/><path d="M33.6 6.8L27.6 10.1L27.6 3.5Z" fill="#dcdcdc"/><path d="M7.300000000000001 30.9H28.6" stroke="#dcdcdc" stroke-width="2"/><path d="M2.3 30.9L8.3 27.6L8.3 34.2Z" fill="#dcdcdc"/><path d="M33.6 30.9L27.6 34.2L27.6 27.6Z" fill="#dcdcdc"/><rect x="13.600" y="9.900" width="8.400" height="18.400" fill="#f6cf74"/><path d="M17.500 13H22M19 16.500H22M17.500 20H22M19 23.500H22" stroke="#8d6a2d" stroke-width="1.300"/></g><g transform="translate(188.0 1158.0)"><path d="M3.400 3.800V31.500M18.300 3.800V31.500M32.500 3.800V31.500" stroke="#dcdcdc" stroke-width="2.200"/><path d="M8.5 13.3H13.3" stroke="#8ec6fa" stroke-width="1.8"/><path d="M5.0 13.3L9.5 10.5L9.5 16.1Z" fill="#8ec6fa"/><path d="M16.8 13.3L12.3 16.1L12.3 10.5Z" fill="#8ec6fa"/><path d="M23.3 13.3H27.5" stroke="#8ec6fa" stroke-width="1.8"/><path d="M19.8 13.3L24.3 10.5L24.3 16.1Z" fill="#8ec6fa"/><path d="M31.0 13.3L26.5 16.1L26.5 10.5Z" fill="#8ec6fa"/></g><g transform="translate(232.0 1158.0)"><rect x="2.300" y="7" width="31.400" height="22.100" stroke="#dcdcdc" stroke-width="2.200"/><path d="M20.100 7V29.100" stroke="#dcdcdc" stroke-width="2.200"/><circle cx="10.800" cy="18.200" r="4.600" stroke="#ffffff" stroke-width="2"/><path d="M3.500 18.200H18M10.800 11V25.500" stroke="#ffffff" stroke-width="2"/><text x="21.200" y="25.400" font-size="14.500" font-weight="700" fill="#ffffff" font-family="'Liberation Sans',sans-serif">.1</text></g><g transform="translate(276.0 1158.0)"><path d="M2.900 2.400V33.600M32.900 2.400V33.600" stroke="#dcdcdc" stroke-width="2.200"/><path d="M9.5 9.1H26.3" stroke="#dcdcdc" stroke-width="2"/><path d="M4.5 9.1L10.5 5.8L10.5 12.4Z" fill="#dcdcdc"/><path d="M31.3 9.1L25.3 12.4L25.3 5.8Z" fill="#dcdcdc"/><path d="M11.500 25L17.500 30.200L26.500 20.500" stroke="#74d083" stroke-width="4"/></g><g transform="translate(320.0 1158.0)"><path d="M2.900 13.300L13.600 2.900M22.900 33.300L33.200 23.400" stroke="#dcdcdc" stroke-width="2.300"/><path d="M12.500 12.600L23.500 22.600" stroke="#dcdcdc" stroke-width="2"/><path d="M8.6 9.1L15.3 10.7L10.9 15.6Z" fill="#dcdcdc"/><path d="M27.3 26.1L20.6 24.5L25.0 19.6Z" fill="#dcdcdc"/><text x="19.300" y="16" font-size="15" font-weight="700" fill="#6fb0f2" font-family="'Liberation Sans',sans-serif">X</text></g><g transform="translate(228.0 1153.0)"><path d="M0 -8.500V0H-8.500Z" fill="#9a9da3"/></g><g transform="translate(272.0 1153.0)"><path d="M0 -8.500V0H-8.500Z" fill="#9a9da3"/></g><g transform="translate(228.0 1197.5)"><path d="M0 -8.500V0H-8.500Z" fill="#9a9da3"/></g><g transform="translate(360.0 1197.5)"><path d="M0 -8.500V0H-8.500Z" fill="#9a9da3"/></g><g transform="translate(20.0 1265.0)"><circle cx="48.5" cy="17.7" r="14.7" stroke="#dcdcdc" stroke-width="2.4"/><path d="M33.8 17.7H25.7L5.8 53.0" stroke="#dcdcdc" stroke-width="2.4" fill="none"/><path d="M0.4 62.6L2.0 48.6L11.6 54.0Z" fill="#dcdcdc"/></g><g transform="translate(108.0 1265.0)"><circle cx="49" cy="17.7" r="14.7" stroke="#dcdcdc" stroke-width="2.4"/><path d="M34.3 17.7H25.8L5.5 53.1" stroke="#dcdcdc" stroke-width="2.4" fill="none"/><path d="M0.0 62.6L1.7 48.6L11.2 54.1Z" fill="#dcdcdc"/><g transform="translate(63.3 37.3) rotate(134.2)"><rect x="0" y="-3.600" width="17.9" height="7.200" fill="#f4f4f4"/><path d="M19.4 -4.500C25.9 -9 39.8 -6 49.8 2C39.8 7 25.9 8 19.4 4.500Z" fill="#d9ab6e"/></g></g><g transform="translate(188.0 1258.6)"><g transform="translate(0 0)"><circle cx="28.200" cy="16" r="4.600" stroke="#dcdcdc" stroke-width="2"/><path d="M24 18.500L18.500 21L12 28M18.500 21L24 28" stroke="#dcdcdc" stroke-width="2" fill="none"/><path d="M8.5 32.5L9.7 25.2L15.3 29.6Z" fill="#dcdcdc"/><path d="M26.5 32.5L20.1 28.7L26.4 25.1Z" fill="#dcdcdc"/></g><path d="M3 9.900H16.600M9.800 3.100V16.700" stroke="#5dc474" stroke-width="3.600"/></g><g transform="translate(232.0 1258.6)"><circle cx="24.100" cy="6.300" r="5.200" stroke="#dcdcdc" stroke-width="2"/><circle cx="24.100" cy="20.100" r="5.200" stroke="#dcdcdc" stroke-width="2"/><path d="M33.100 1.700V34.300" stroke="#8ec6fa" stroke-width="2.300"/><path d="M19 6.300H13L7 13M19 20.100H14L9.500 27" stroke="#dcdcdc" stroke-width="2" fill="none"/><path d="M3.5 17.5L4.9 10.2L10.4 14.8Z" fill="#dcdcdc"/><path d="M6.5 32.0L7.0 24.6L13.1 28.5Z" fill="#dcdcdc"/></g><g transform="translate(276.0 1258.6)"><circle cx="26.600" cy="11.900" r="6.400" stroke="#dcdcdc" stroke-width="2"/><path d="M20.300 12.500H15L8.500 22.500" stroke="#dcdcdc" stroke-width="2" fill="none"/><path d="M2.5 30.3L3.3 21.3L10.4 25.9Z" fill="#dcdcdc"/><path transform="translate(27.8 26.5) scale(1.0)" d="M3 -9L-6 2H-0.500L-3.500 9L6.500 -2.500H0.500Z" fill="#f6cf74"/></g><g transform="translate(188.0 1301.4)"><g transform="translate(0 0)"><circle cx="28.200" cy="16" r="4.600" stroke="#dcdcdc" stroke-width="2"/><path d="M24 18.500L18.500 21L12 28M18.500 21L24 28" stroke="#dcdcdc" stroke-width="2" fill="none"/><path d="M8.5 32.5L9.7 25.2L15.3 29.6Z" fill="#dcdcdc"/><path d="M26.5 32.5L20.1 28.7L26.4 25.1Z" fill="#dcdcdc"/></g><path d="M4 5.300L13.200 14.500M13.200 5.300L4 14.500" stroke="#e8645a" stroke-width="3.600"/></g><g transform="translate(232.0 1301.4)"><circle cx="27" cy="11.900" r="5.600" stroke="#dcdcdc" stroke-width="2"/><circle cx="27" cy="25.400" r="5.600" stroke="#dcdcdc" stroke-width="2"/><path d="M21.500 11.900H15L8 23" stroke="#dcdcdc" stroke-width="2" fill="none"/><path d="M2.5 31.5L3.2 23.0L9.9 27.4Z" fill="#dcdcdc"/></g><g transform="translate(20.0 1409.8)"><rect x="1.200" y="6.700" width="61.600" height="51.800" stroke="#dcdcdc" stroke-width="2.400"/><path d="M1.200 18.900H62.800M1.200 32.800H62.800M1.200 45H62.800M21.600 18.900V58.500M42 18.900V58.500" stroke="#dcdcdc" stroke-width="2.400"/></g><g transform="translate(103.0 1409.8)"><rect x="5" y="0.200" width="55" height="54.200" stroke="#dcdcdc" stroke-width="2.400"/><path d="M5 13.600H60M5 27.100H60M5 41H60M24.200 13.600V54.400M42.600 13.600V54.400" stroke="#dcdcdc" stroke-width="2.400"/><circle cx="50" cy="52" r="13" fill="#3d4656"/><g transform="translate(67.5 36.1) rotate(142.0)"><rect x="0" y="-3.600" width="15.5" height="7.200" fill="#f4f4f4"/><path d="M17.0 -4.500C23.5 -9 34.4 -6 43.0 2C34.4 7 23.5 8 17.0 4.500Z" fill="#d9ab6e"/></g></g><g transform="translate(188.0 1401.4)"><path d="M11 5H24L31 12V24H11Z" fill="#dcdcdc"/><path d="M24 5V12H31Z" fill="#f8f8f8"/><g fill="none" stroke="#c59a62" stroke-width="2.200"><rect x="2.5" y="2.5" width="6.500" height="9" rx="3"/><rect x="2.5" y="8.5" width="6.500" height="9" rx="3"/></g><rect x="15" y="17.500" width="19" height="15" fill="#f8f8f8" stroke="#3d4656" stroke-width="1"/><rect x="15" y="17.500" width="19" height="3.600" fill="#8a8e96"/><path d="M18 25H20.500M22.500 25H31M18 29H20.500M22.500 29H31" stroke="#3a424f" stroke-width="1.900"/></g><g transform="translate(232.0 1401.4)"><path d="M10 3H24L30 9V26H10Z" fill="#dcdcdc"/><path d="M24 3V9H30Z" fill="#f8f8f8"/><rect x="9" y="13" width="18" height="13" fill="#dcdcdc"/><path d="M9 17.500H27M9 21.800H27M15 13V26M21 13V26" stroke="#70747d" stroke-width="1.400"/><g fill="none" stroke="#c59a62" stroke-width="2.200"><rect x="2.5" y="2.5" width="6.500" height="9" rx="3"/><rect x="2.5" y="8.5" width="6.500" height="9" rx="3"/></g><path d="M27.500 14V25" stroke="#3d4656" stroke-width="7"/><path d="M27.500 13V24" stroke="#5fa3ee" stroke-width="4"/><path d="M21.500 23H33.500L27.500 32Z" fill="#5fa3ee" stroke="#3d4656" stroke-width="1"/></g><g transform="translate(188.0 1446.2)"><rect x="10.600" y="25.900" width="23.200" height="8" fill="#dcdcdc"/><rect x="10.600" y="16.400" width="23.200" height="7.100" fill="#8ec6fa"/><rect x="2.200" y="2.600" width="17.800" height="17.400" fill="#f6f8fb" stroke="#3d4656" stroke-width="1"/><path d="M5.500 7.500H7.500M9.500 7.500H16.500M5.500 11.500H7.500M9.500 11.500H16.500M5.500 15.500H7.500M9.500 15.500H16.500" stroke="#4d82c8" stroke-width="1.900"/><text x="27" y="14.100" font-size="17" font-weight="700" text-anchor="middle" fill="#6fb0f2" font-family="'Liberation Sans',sans-serif">A</text></g><g transform="translate(232.0 1446.2)"><rect x="5" y="20" width="28" height="14" fill="#dcdcdc"/><g transform="translate(0 6)"><rect x="9" y="13" width="18" height="13" fill="#dcdcdc"/><path d="M9 17.500H27M9 21.800H27M15 13V26M21 13V26" stroke="#70747d" stroke-width="1.400"/></g><g fill="none" stroke="#c59a62" stroke-width="2.200"><rect x="2.5" y="3.5" width="6.500" height="9" rx="3"/><rect x="2.5" y="9.5" width="6.500" height="9" rx="3"/></g><circle cx="25.500" cy="10.500" r="10" fill="#3d4656"/><g fill="none" stroke="#5dc474" stroke-width="2.8"><path d="M19.1 10.5A6.4 6.4 0 0 1 30.0 6.0"/><path d="M31.9 10.5A6.4 6.4 0 0 1 21.0 15.0"/></g><path d="M32.2 9.2L27.9 4.8L34.8 3.6Z" fill="#5dc474"/><path d="M18.8 11.8L23.1 16.2L16.2 17.4Z" fill="#5dc474"/></g><g transform="translate(20.0 1552.5)"><path d="M3.200 1.500V60.500" stroke="#e0726c" stroke-width="2.400"/><path d="M7.700 61.800H63.600" stroke="#dcdcdc" stroke-width="2.400"/><rect x="0.400" y="59.400" width="5.700" height="5.700" fill="#e0726c"/></g><g transform="translate(196.0 1553.0)"><path d="M1 1V64.200M63 1V64.200" stroke="#dcdcdc" stroke-width="2.400"/><path d="M10.2 14H54" stroke="#dcdcdc" stroke-width="2.2"/><path d="M3.2 14.0L11.2 10.0L11.2 18.0Z" fill="#dcdcdc"/><path d="M61.0 14.0L53.0 18.0L53.0 10.0Z" fill="#dcdcdc"/><path d="M24.500 42V34.500A7.500 7.500 0 0 1 39.500 34.500V42" stroke="#f6cf74" stroke-width="4" fill="none"/><rect x="19" y="41.700" width="25.600" height="18.400" rx="1" fill="#f6cf74"/><rect x="30.800" y="47" width="2.200" height="7" fill="#5d4a1c"/></g><g transform="translate(100.0 1546.0)"><rect x="15.900" y="2.300" width="12.100" height="9.300" fill="#8ec6fa"/><rect x="2.100" y="16" width="12.700" height="10" fill="#dcdcdc"/><path d="M15.100 2.300V25.400" stroke="#e07a74" stroke-width="1.800"/><path transform="translate(26.400 26) rotate(50) scale(1.05)" d="M3 -9L-6 2H-0.500L-3.500 9L6.500 -2.500H0.500Z" fill="#f6cf74"/></g><g transform="translate(144.0 1546.0)"><path d="M7.200 2.300H2.800V29.300H7.200" stroke="#ffffff" stroke-width="2" fill="none"/><path d="M24.800 2.300H29.300V15" stroke="#ffffff" stroke-width="2" fill="none"/><path d="M14.900 16.600L23.700 8.900" stroke="#e3ccd0" stroke-width="2.200"/><path d="M8.300 13.800L18.800 23.200" stroke="#d9707c" stroke-width="2.400"/><circle cx="27.8" cy="22.1" r="6.1" fill="#f6cf74"/><path d="M24.8 27.6H30.9L29.9 32.5H25.7Z" fill="#ffffff"/></g><g transform="translate(100.0 1590.0)"><path d="M7.200 2.300H2.800V29.300H7.200" stroke="#ffffff" stroke-width="2" fill="none"/><path d="M24.800 2.300H29.300V15" stroke="#ffffff" stroke-width="2" fill="none"/><path d="M14.900 16.600L23.700 8.900" stroke="#e3ccd0" stroke-width="2.200"/><path d="M8.300 13.800L18.800 23.200" stroke="#d9707c" stroke-width="2.400"/><circle cx="27.8" cy="22.1" r="6.1" fill="#8ec6fa"/><path d="M27.8 16.0A6.1 6.1 0 0 1 27.8 28.200000000000003Z" fill="#f6cf74"/><path d="M24.8 27.6H30.9L29.9 32.5H25.7Z" fill="#ffffff"/></g><g transform="translate(144.0 1590.0)"><path d="M7.200 2.300H2.800V29.300H7.200" stroke="#ffffff" stroke-width="2" fill="none"/><path d="M24.800 2.300H29.300V15" stroke="#ffffff" stroke-width="2" fill="none"/><path d="M14.900 16.600L23.700 8.900" stroke="#e3ccd0" stroke-width="2.200"/><path d="M8.300 13.800L18.800 23.200" stroke="#d9707c" stroke-width="2.400"/><circle cx="27.8" cy="22.1" r="6.1" fill="#86dbe6"/><path d="M24.8 27.6H30.9L29.9 32.5H25.7Z" fill="#ffffff"/></g><g transform="translate(276.0 1546.0)"><path d="M2.500 2.600V32.400" stroke="#dcdcdc" stroke-width="2"/><path d="M32.700 2.600V32.4" stroke="#dcdcdc" stroke-width="2"/><path d="M8.5 8.8H26.7" stroke="#dcdcdc" stroke-width="1.8"/><path d="M4.0 8.8L9.5 5.8L9.5 11.8Z" fill="#dcdcdc"/><path d="M31.2 8.8L25.7 11.8L25.7 5.8Z" fill="#dcdcdc"/><path d="M11.500 23A6.300 6.300 0 0 1 22 18.500" stroke="#5fa3ee" stroke-width="2.600" fill="none"/><path d="M24.3 21.8L18.0 19.5L24.3 15.1Z" fill="#5fa3ee"/><path d="M23.800 23A6.300 6.300 0 0 1 13.300 27.500" stroke="#e8645a" stroke-width="2.600" fill="none"/><path d="M11.0 24.2L17.3 26.5L11.0 30.9Z" fill="#e8645a"/></g><g transform="translate(320.0 1546.0)"><path d="M2.500 2.600V32.400" stroke="#dcdcdc" stroke-width="2"/><path d="M32.700 2.600V13" stroke="#dcdcdc" stroke-width="2"/><path d="M8.5 8.8H26.7" stroke="#dcdcdc" stroke-width="1.8"/><path d="M4.0 8.8L9.5 5.8L9.5 11.8Z" fill="#dcdcdc"/><path d="M31.2 8.8L25.7 11.8L25.7 5.8Z" fill="#dcdcdc"/><circle cx="27.5" cy="22" r="6.5" fill="#f6cf74"/><path d="M24.2 27.9H30.8L29.8 33.0H25.2Z" fill="#ffffff"/></g><g transform="translate(276.0 1590.0)"><path d="M2.500 2.600V32.400" stroke="#dcdcdc" stroke-width="2"/><path d="M32.700 2.600V13" stroke="#dcdcdc" stroke-width="2"/><path d="M8.5 8.8H26.7" stroke="#dcdcdc" stroke-width="1.8"/><path d="M4.0 8.8L9.5 5.8L9.5 11.8Z" fill="#dcdcdc"/><path d="M31.2 8.8L25.7 11.8L25.7 5.8Z" fill="#dcdcdc"/><circle cx="27.8" cy="22" r="6.5" fill="#8ec6fa"/><path d="M27.8 15.5A6.5 6.5 0 0 1 27.8 28.5Z" fill="#f6cf74"/><path d="M24.6 27.9H31.1L30.1 33.0H25.5Z" fill="#ffffff"/></g><g transform="translate(320.0 1590.0)"><path d="M2.500 2.600V32.400" stroke="#dcdcdc" stroke-width="2"/><path d="M32.700 2.600V13" stroke="#dcdcdc" stroke-width="2"/><path d="M8.5 8.8H26.7" stroke="#dcdcdc" stroke-width="1.8"/><path d="M4.0 8.8L9.5 5.8L9.5 11.8Z" fill="#dcdcdc"/><path d="M31.2 8.8L25.7 11.8L25.7 5.8Z" fill="#dcdcdc"/><circle cx="27.5" cy="22" r="6.5" fill="#86dbe6"/><path d="M24.2 27.9H30.8L29.8 33.0H25.2Z" fill="#ffffff"/></g><g transform="translate(93.5 1628.0)"><path d="M0 -8.500V0H-8.500Z" fill="#9a9da3"/></g><g transform="translate(267.5 1628.0)"><path d="M0 -8.500V0H-8.500Z" fill="#9a9da3"/></g><path d="M31 1712H53M42 1701V1723" stroke="#e4e5e8" stroke-width="2.400"/><path d="M93.200 1703.100H114M93.200 1708.800H114M93.200 1721H114" stroke="#dcdcdc" stroke-width="2.300"/><path d="M88.200 1715H105.800" stroke="#dcdcdc" stroke-width="4"/><path d="M107.500 1716.500L111 1711.500L114.500 1716.500Z" fill="#c9ccd2"/></svg>
<div class="abs" style="left:2552px;top:160px;width:472px;height:1526px;background:#3d4656"></div>
<div class="abs" style="left:2655px;top:160px;width:321px;height:46px;background:#313846;border-bottom:2px solid #262c36"></div>
<div class="abs" style="left:2654px;top:160px;width:2px;height:46px;background:#262c36"></div>
<div class="abs" style="left:2760px;top:160px;width:2px;height:46px;background:#262c36"></div>
<div class="abs" style="left:2865px;top:160px;width:2px;height:46px;background:#262c36"></div>
<div class="abs" style="left:2975px;top:160px;width:2px;height:46px;background:#262c36"></div>
<div class="abs" style="left:2977px;top:162px;width:47px;height:44px;background:#3a4352;border-bottom:2px solid #262c36"></div>
<svg class="abs" style="left:2552px;top:160px" width="472" height="46" viewBox="2552 160 472 46" fill="none"><path d="M2599.600 170.200H2615.500L2605.500 176H2589.600Z M2599.600 178.800H2615.500L2605.500 184.600H2589.600Z M2599.600 187.500H2610L2600 193.300H2589.600Z" fill="#dcdcdc"/><circle cx="2614" cy="191.300" r="9" fill="#3d4656"/><circle cx="2614" cy="191.300" r="7.100" fill="#dcdcdc"/><rect x="2613" y="190" width="2.200" height="5.500" fill="#2d3440"/><circle cx="2614.100" cy="187.500" r="1.300" fill="#2d3440"/><path d="M2695.400 177H2717L2725.200 184.500V193.800H2695.400Z" fill="#dcdcdc"/><path d="M2717.500 177V184.500H2725.200Z" fill="#f6f6f6" stroke="#313846" stroke-width="1"/><path d="M2703.500 174V182A3 3 0 0 1 2697.500 182V172.500A4.500 4.500 0 0 1 2706.500 172.500V183" stroke="#313846" stroke-width="5.500"/><path d="M2703.500 174V182A3 3 0 0 1 2697.500 182V172.500A4.500 4.500 0 0 1 2706.500 172.500V183" stroke="#dcdcdc" stroke-width="2.200"/><rect x="2801" y="169.200" width="27" height="25.400" fill="#dcdcdc"/><rect x="2801" y="169.200" width="27" height="5" fill="#a5a8ad"/><rect x="2803" y="170.700" width="3" height="2" fill="#2d3440"/><path d="M2805 177H2810V182H2805Z M2813 177H2818V182H2813Z M2820 177H2825V182H2820Z M2813 184H2818V189H2813Z M2820 184H2825V189H2820Z" fill="#7b7f87"/><path d="M2805 177H2810V182H2805Z M2805 184H2810V189H2805Z" fill="#2d3440"/><rect x="2804" y="191" width="21" height="1.600" fill="#8a8e96"/><path d="M2994 177L3000 183.500L2994 190M3003 177L3009 183.500L3003 190" stroke="#8f959f" stroke-width="1.800"/></svg>
<div class="t" style="left:2573px;top:210px;font-size:23px;font-weight:500;color:#f2f3f5">图层</div>
<svg class="abs" style="left:2971px;top:205px" width="34" height="32" viewBox="0 0 34 32" fill="none"><rect x="10" y="2.500" width="17" height="25" stroke="#dcdcdc" stroke-width="2.200"/><path d="M21 2.500V27.500" stroke="#dcdcdc" stroke-width="2.200"/><path d="M7 15H19" stroke="#8ec6fa" stroke-width="2.400"/><path d="M1.500 15L8 10.500V19.500Z" fill="#8ec6fa"/></svg>
<svg class="abs" style="left:2552px;top:262px" width="472" height="52" viewBox="2552 262 472 52"><g transform="translate(2596 288)"><path d="M-3.6 3.5H16.4L4.4 14.0H-15.6Z" fill="#dcdcdc" stroke="#3d4656" stroke-width="1.1"/><path d="M-3.6 -3.5H16.4L4.4 7.0H-15.6Z" fill="#dcdcdc" stroke="#3d4656" stroke-width="1.1"/><path d="M-3.6 -10.5H16.4L4.4 0.0H-15.6Z" fill="#8ec6fa" stroke="#3d4656" stroke-width="1.1"/><circle cx="0" cy="-10.500" r="6.800" fill="#dcdcdc" stroke="#3d4656" stroke-width="1.200"/></g><g transform="translate(2644 288)"><path d="M-6.5 -4.5H10.0L0.5 5.0H-16.0Z" fill="#dcdcdc" stroke="#3d4656" stroke-width="1.1"/><path d="M-6.5 -10.5H10.0L0.5 -1.0H-16.0Z" fill="#dcdcdc" stroke="#3d4656" stroke-width="1.1"/><path d="M-6.5 -16.5H10.0L0.5 -7.0H-16.0Z" fill="#dcdcdc" stroke="#3d4656" stroke-width="1.1"/><g transform="translate(7.500 7.700) rotate(-42)"><rect x="-8" y="-4" width="9" height="8" fill="#f3d47c" stroke="#3d4656" stroke-width="1"/><rect x="1" y="-5" width="3.500" height="10" fill="#fbfbfb"/><rect x="4.500" y="-2" width="5" height="4" fill="#fbfbfb"/></g></g><g transform="translate(2692 288)"><path d="M-1.5 3.3H15.0L5.5 12.8H-11.0Z" fill="#dcdcdc" stroke="#3d4656" stroke-width="1.1"/><path d="M-1.5 -2.7H15.0L5.5 6.8H-11.0Z" fill="#dcdcdc" stroke="#3d4656" stroke-width="1.1"/><path d="M-1.5 -8.7H15.0L5.5 0.8H-11.0Z" fill="#dcdcdc" stroke="#3d4656" stroke-width="1.1"/><path d="M-15 -9L-6.500 -15.500V-11.500C1 -11.500 6 -9 7 -3.500C3 -6.500 -1 -7 -6.500 -7V-2.500Z" fill="#8ec6fa" stroke="#3d4656" stroke-width="1.200"/></g><g transform="translate(2740 288)"><path d="M-4.5 -4.5H12.0L2.5 5.0H-14.0Z" fill="#8ec6fa" stroke="#3d4656" stroke-width="1.1"/><path d="M-4.5 -10.5H12.0L2.5 -1.0H-14.0Z" fill="#dcdcdc" stroke="#3d4656" stroke-width="1.1"/><path d="M-4.5 -16.5H12.0L2.5 -7.0H-14.0Z" fill="#dcdcdc" stroke="#3d4656" stroke-width="1.1"/><path d="M13 2L2 13" stroke="#3d4656" stroke-width="6"/><path d="M12.800 2.500L4 11.300" stroke="#ffffff" stroke-width="2.800"/><path d="M0.500 7V14.500H8Z" fill="#ffffff"/></g><g transform="translate(2788 288)"><path d="M-4.9 -4.5H11.6L2.1 5.0H-14.4Z" fill="#8ec6fa" stroke="#3d4656" stroke-width="1.1"/><path d="M-4.9 -10.5H11.6L2.1 -1.0H-14.4Z" fill="#dcdcdc" stroke="#3d4656" stroke-width="1.1"/><path d="M-4.9 -16.5H11.6L2.1 -7.0H-14.4Z" fill="#dcdcdc" stroke="#3d4656" stroke-width="1.1"/><path d="M2 13.400L13 2.400" stroke="#3d4656" stroke-width="6"/><path d="M2.500 13L11 4.500" stroke="#ffffff" stroke-width="2.800"/><path d="M14.500 1V8.500L7 1Z" fill="#ffffff"/></g><g transform="translate(2836 288)"><path d="M-5.4 -14.8H11.8L1.6 -3.5H-15.6Z" fill="#dcdcdc" stroke="#3d4656" stroke-width="1.1"/><circle cx="7.300" cy="4" r="10" fill="#3d4656"/><g stroke="#86dbe6" stroke-width="2.100" fill="none"><path d="M7.300 -4.700V12.700M-0.200 -0.300L14.800 8.300M-0.200 8.300L14.800 -0.300"/><path d="M4.800 -3L7.300 -0.500L9.800 -3M4.800 11L7.300 8.500L9.800 11M0.300 3.200L3.700 2.200L2.800 -1.200M14.300 4.800L10.900 5.800L11.800 9.200M0.300 4.800L3.700 5.800L2.800 9.200M14.300 3.200L10.900 2.200L11.800 -1.200"/></g></g><g transform="translate(2884 288)"><path d="M-5.4 -14.8H11.8L1.6 -3.5H-15.6Z" fill="#dcdcdc" stroke="#3d4656" stroke-width="1.1"/><circle cx="9.200" cy="0.800" r="8" fill="#3d4656"/><circle cx="9.200" cy="0.800" r="6.200" fill="#8fdbe6"/><path d="M6 7.500H12.400L11.400 12H7Z" fill="#ffffff"/></g><g transform="translate(2932 288)"><path d="M-5.4 -14.8H11.8L1.6 -3.5H-15.6Z" fill="#dcdcdc" stroke="#3d4656" stroke-width="1.1"/><rect x="0" y="-8" width="18" height="21" fill="#3d4656"/><path d="M5 2V-2.500A3.800 3.800 0 0 1 12.600 -2.500V2" fill="none" stroke="#86dbe6" stroke-width="2.500"/><rect x="2" y="1.700" width="13.500" height="10" fill="#86dbe6"/><rect x="7.800" y="4.200" width="1.800" height="4.500" fill="#3d4656"/></g><g transform="translate(2980 288)"><path d="M-5.4 -14.8H11.8L1.6 -3.5H-15.6Z" fill="#dcdcdc" stroke="#3d4656" stroke-width="1.1"/><rect x="-3" y="-8" width="18" height="21" fill="#3d4656"/><path d="M6.500 2V-2.500A3.800 3.800 0 0 1 14.100 -2.500V-1" fill="none" stroke="#f6cf74" stroke-width="2.500"/><rect x="-2" y="1.700" width="13.500" height="10" fill="#f6cf74"/><rect x="3.800" y="4.200" width="1.800" height="4.500" fill="#3d4656"/></g></svg>
<div class="fld" style="left:2572px;top:325px;width:436px;height:52px;border-color:#303744"></div>
<svg class="abs" style="left:2572px;top:325px" width="200" height="52" viewBox="2572 325 200 52" fill="none"><circle cx="2600" cy="351" r="8.200" fill="#dcdcdc"/><g opacity="0.55"><path d="M2629 350V345A5 5 0 0 1 2639 345V350" stroke="#7a8496" stroke-width="2.400"/><rect x="2627" y="349.500" width="14" height="11" fill="#7a8496"/></g><g stroke="#717b8d" stroke-width="2" opacity="0.800"><path d="M2668 342V360M2660.200 346.500L2675.800 355.500M2660.200 355.500L2675.800 346.500"/><circle cx="2668" cy="351" r="4.500"/></g><rect x="2694" y="343" width="16" height="16" fill="#ffffff" stroke="#000000" stroke-width="2"/></svg>
<div class="val" style="left:2734px;top:340px;font-size:23px">0</div>
<div class="arr" style="left:2987.5px;top:345.5px"></div>
<div class="fld" style="left:2574px;top:382px;width:432px;height:50px;border-color:#303744"></div>
<div class="val" style="left:2587px;top:395.5px;font-size:21.6px;color:#f4f5f7">未保存的图层状态</div>
<div class="arr" style="left:2985.5px;top:402px"></div>
<svg class="abs" style="left:2580px;top:446px" width="20" height="26" fill="none"><path d="M6 4L14 12.500L6 21" stroke="#d5d8dd" stroke-width="2.200"/></svg>
<div class="t" style="left:2620px;top:448px;font-size:21.500px;color:#d4d7dc;font-weight:500">显示图层列表</div>
<div class="abs" style="left:2552px;top:503px;width:472px;height:2.500px;background:#2a303b"></div>
<div class="t" style="left:2572px;top:510px;font-size:23px;font-weight:500;color:#f2f3f5">特性</div>
<div class="abs" style="left:2793px;top:508.500px;width:119px;height:26px;background:#384150;border:1.500px solid #2b313c;border-radius:3px"></div>
<div class="abs" style="left:2850px;top:510px;width:60.500px;height:23px;background:#4a556a;border-left:1.500px solid #2b313c"></div>
<div class="t" style="left:2806px;top:513.500px;font-size:15.500px;color:#9ba1ab;font-weight:500">全部</div>
<div class="t" style="left:2865px;top:513.500px;font-size:15.500px;color:#f1f2f4;font-weight:700">我的</div>
<svg class="abs" style="left:2928px;top:505px" width="36" height="34" viewBox="0 0 36 34" fill="none"><path d="M4 3H23V15L14 24V29H4Z" stroke="#dcdcdc" stroke-width="2"/><path d="M8 9H19M8 14H19M8 19H14" stroke="#dcdcdc" stroke-width="2"/><path d="M15 30.500L16.500 24.500L27 14L32 19L21.500 29.500Z" fill="#dcdcdc" stroke="#3d4656" stroke-width="1.400"/></svg>
<svg class="abs" style="left:2972px;top:506px" width="34" height="32" viewBox="0 0 34 32" fill="none"><rect x="10" y="2.500" width="17" height="25" stroke="#dcdcdc" stroke-width="2.200"/><path d="M21 2.500V27.500" stroke="#dcdcdc" stroke-width="2.200"/><path d="M7 15H19" stroke="#8ec6fa" stroke-width="2.400"/><path d="M1.500 15L8 10.500V19.500Z" fill="#8ec6fa"/></svg>
<div class="fld dis" style="left:2573px;top:554.500px;width:430px;height:40px;border-color:#394250;background:#434d5f"></div>
<div class="val" style="left:2585px;top:563px;font-size:21.500px;color:#79818f">模型空间</div>
<div class="arr" style="left:2992px;top:571px;margin-left:-14px;border-top-color:#6e7786"></div>
<div class="abs" style="left:2573px;top:604.500px;width:430px;height:44px;border:1.500px solid #475164;border-radius:3px;background:#3f4859"></div>
<div class="lbl" style="left:2540px;width:220px;top:616.2px">颜色</div>
<div class="fld" style="left:2781px;top:609.0px;width:216px;height:36px"></div>
<div class="abs" style="left:2800px;top:618.5px;width:17px;height:17px;background:#ee4423;border:2px solid #14171c"></div>
<div class="val" style="left:2838px;top:617.0px;font-size:21px">红</div>
<div class="arr" style="left:2975px;top:623.0px"></div>
<div class="lbl" style="left:2540px;width:220px;top:662.2px">图层</div>
<div class="fld" style="left:2781px;top:655.0px;width:216px;height:36px"></div>
<div class="val" style="left:2794px;top:662.0px;font-size:23px">0</div>
<div class="arr" style="left:2975px;top:669.0px"></div>
<div class="lbl" style="left:2540px;width:220px;top:708.2px">线型</div>
<div class="fld" style="left:2781px;top:701.0px;width:216px;height:36px"></div>
<div class="abs" style="left:2796px;top:718.5px;width:43px;height:2px;background:#e8e9ec"></div>
<div class="abs" style="left:2850px;top:718.5px;width:12px;height:2px;background:#e8e9ec"></div>
<div class="val" style="left:2888px;top:708.8px;font-size:21.5px">ACAD...</div>
<div class="arr" style="left:2975px;top:715.0px"></div>
<div class="lbl" style="left:2540px;width:220px;top:754.2px">线型比例</div>
<div class="fld" style="left:2781px;top:747.0px;width:216px;height:36px"></div>
<div class="val" style="left:2788px;top:754.0px;font-size:23px">1</div>
<div class="lbl" style="left:2540px;width:220px;top:800.2px">线宽</div>
<div class="fld" style="left:2781px;top:793.0px;width:216px;height:36px"></div>
<div class="val" style="left:2794px;top:800.0px;font-size:23px">ByLayer</div>
<div class="arr" style="left:2975px;top:807.0px"></div>
<div class="lbl" style="left:2540px;width:220px;top:846.2px">透明度</div>
<div class="fld" style="left:2786px;top:839.0px;width:128px;height:36px;background:#465165;border-color:#3a4352"></div>
<div class="abs" style="left:2787px;top:841.0px;width:2px;height:32px;background:#5b8fd8;border-radius:1px"></div>
<div class="abs" style="left:2845px;top:856.0px;width:1.500px;height:13px;background:#6a7486"></div>
<div class="val" style="left:2889px;top:846.5px;font-size:23px">0</div>
<div class="fld" style="left:2920px;top:838.0px;width:77px;height:37px"></div>
<svg class="abs" style="left:2931px;top:843.0px" width="34" height="30" viewBox="0 0 34 30"><path d="M11 15H29L21 22H3Z" fill="#dcdcdc"/><path d="M11 10H29L21 17H3Z" fill="#dcdcdc" stroke="#4e596e" stroke-width="1"/><path d="M11 4H29L21 11.500H3Z" fill="#8ec6fa" stroke="#4e596e" stroke-width="1"/></svg>
<div class="arr" style="left:2975px;top:853.0px"></div>
<div class="lbl" style="left:2540px;width:220px;top:892.2px">文字样式</div>
<div class="fld" style="left:2781px;top:885.0px;width:216px;height:36px"></div>
<div class="val" style="left:2794px;top:892.0px;font-size:23px">Standard</div>
<div class="arr" style="left:2975px;top:899.0px"></div>
<div class="lbl" style="left:2540px;width:220px;top:938.2px">标注样式</div>
<div class="fld" style="left:2781px;top:931.0px;width:216px;height:36px"></div>
<div class="val" style="left:2794px;top:938.0px;font-size:23px">ISO-25</div>
<div class="arr" style="left:2975px;top:945.0px"></div>
<div class="lbl" style="left:2540px;width:220px;top:984.2px">多重引线样式</div>
<div class="fld" style="left:2781px;top:977.0px;width:216px;height:36px"></div>
<div class="val" style="left:2794px;top:984.0px;font-size:23px">Standard</div>
<div class="arr" style="left:2975px;top:991.0px"></div>
<div class="lbl" style="left:2540px;width:220px;top:1030.2px">表格样式</div>
<div class="fld" style="left:2781px;top:1023.0px;width:216px;height:36px"></div>
<div class="val" style="left:2794px;top:1030.0px;font-size:23px">Standard</div>
<div class="arr" style="left:2975px;top:1037.0px"></div>
<div class="lbl" style="left:2540px;width:220px;top:1076.2px">注释比例</div>
<div class="fld" style="left:2781px;top:1069.0px;width:216px;height:36px"></div>
<div class="val" style="left:2794px;top:1076.0px;font-size:23px">1:1</div>
<div class="arr" style="left:2975px;top:1083.0px"></div>
<div class="lbl" style="left:2540px;width:220px;top:1122.2px">文字高度</div>
<div class="fld" style="left:2781px;top:1115.0px;width:169px;height:36px"></div>
<div class="val" style="left:2788px;top:1122.0px;font-size:23px">2.5</div>
<div class="fld" style="left:2956px;top:1115.0px;width:40px;height:36px;background:#414b5c;border-color:#363e4b"></div>
<svg class="abs" style="left:2955px;top:1116.0px" width="42" height="34" viewBox="0 0 42 34" fill="none"><path d="M5 3V29M32 3V12" stroke="#dcdcdc" stroke-width="2"/><path d="M9 7.500H28" stroke="#8ec6fa" stroke-width="2"/><path d="M7 7.500L12 4.500V10.500ZM30 7.500L25 4.500V10.500Z" fill="#8ec6fa"/><path d="M26 21.500H40M33 14.500V28.500" stroke="#ffffff" stroke-width="2"/><rect x="29.500" y="18" width="7" height="7" stroke="#ffffff" stroke-width="1.600"/></svg>
<div class="lbl" style="left:2540px;width:220px;top:1168.2px">打印样式</div>
<div class="fld" style="left:2781px;top:1161.0px;width:216px;height:36px"></div>
<div class="val" style="left:2794px;top:1168.0px;font-size:23px">ByColor</div>
<div class="arr" style="left:2975px;top:1175.0px"></div>
<div class="lbl" style="left:2540px;width:220px;top:1214.2px">打印样式表</div>
<div class="fld" style="left:2781px;top:1207.0px;width:216px;height:36px"></div>
<div class="val" style="left:2794px;top:1215.0px;font-size:21px">无</div>
<div class="arr" style="left:2975px;top:1221.0px"></div>
<div class="lbl" style="left:2549.5px;width:220px;top:1260.2px">打印样式附着到</div>
<div class="fld dis" style="left:2781px;top:1253.0px;width:216px;height:36px"></div>
<div class="val" style="left:2788px;top:1261.0px;font-size:21px;color:#7c8492">模型</div>
<div class="lbl" style="left:2540px;width:220px;top:1306.2px">打印表类型</div>
<div class="fld dis" style="left:2781px;top:1299.0px;width:216px;height:36px"></div>
<div class="val" style="left:2788px;top:1307.0px;font-size:21px;color:#7c8492">不可用</div>
<div class="abs" style="left:368px;top:1686px;width:2656px;height:48px;background:#3b4453"></div>
<div class="abs" style="left:368px;top:1686px;width:2656px;height:2.500px;background:#2a303b"></div>
<div class="abs" style="left:1954px;top:1730.500px;width:1070px;height:4px;background:#2e3440"></div>
<div class="abs" style="left:369.500px;top:1688px;width:119px;height:46px;background:#4a566c"></div>
<div class="abs" style="left:488px;top:1688px;width:2px;height:46px;background:#2a303b"></div>
<div class="abs" style="left:534px;top:1688px;width:2px;height:46px;background:#2a303b"></div>
<div class="abs" style="left:652px;top:1688px;width:2px;height:46px;background:#2a303b"></div>
<div class="abs" style="left:770px;top:1688px;width:2px;height:46px;background:#2a303b"></div>
<div class="t" style="left:404px;top:1697px;font-size:22px;font-weight:700;color:#f3f4f6">模型</div>
<svg class="abs" style="left:498px;top:1696px" width="28" height="28"><path d="M3 14H25M14 3V25" stroke="#e4e5e8" stroke-width="2"/></svg>
<div class="t" style="left:565px;top:1697px;font-size:22px;font-weight:500;color:#aeb2b9">布局1</div>
<div class="t" style="left:682px;top:1697px;font-size:22px;font-weight:500;color:#aeb2b9">布局2</div>
<div class="abs" style="left:1954px;top:1688px;width:2px;height:46px;background:#2a303b"></div>
<div class="t" style="left:1966px;top:1696px;font-size:24.2px;color:#c7cad0;letter-spacing:-0.05px">2083.2606, 1760.4064, 0.0000</div>
<svg class="abs" style="left:2290px;top:1686px" width="734" height="48" viewBox="2290 1686 734 48" fill="none"><rect x="2302" y="1691.5" width="40" height="39" fill="#5b7fb6"/><path d="M2314 1694.7V1724.7M2322.500 1694.7V1724.7M2330.800 1694.7V1724.7M2306.700 1702.2H2337.300M2306.700 1710.4H2337.300M2306.700 1718.3H2337.300" stroke="#ffffff" stroke-width="2.100"/><rect x="2354" y="1697.7" width="4" height="4" fill="#dcdcdc"/><rect x="2354" y="1707.7" width="4" height="4" fill="#dcdcdc"/><rect x="2354" y="1717.7" width="4" height="4" fill="#dcdcdc"/><rect x="2364" y="1697.7" width="4" height="4" fill="#dcdcdc"/><rect x="2364" y="1707.7" width="4" height="4" fill="#dcdcdc"/><rect x="2364" y="1717.7" width="4" height="4" fill="#dcdcdc"/><rect x="2374" y="1697.7" width="4" height="4" fill="#dcdcdc"/><rect x="2374" y="1707.7" width="4" height="4" fill="#dcdcdc"/><rect x="2374" y="1717.7" width="4" height="4" fill="#dcdcdc"/><path d="M2395.300 1694.7V1724.7H2426" stroke="#dcdcdc" stroke-width="2.200"/><path d="M2395.300 1715.4H2404.800V1724.7" stroke="#dcdcdc" stroke-width="2"/><circle cx="2451.400" cy="1710.5" r="12.300" stroke="#dcdcdc" stroke-width="2.300"/><path d="M2470 1710.5H2451.400L2465.200 1696.7" stroke="#dcdcdc" stroke-width="2.200" stroke-linejoin="miter"/><rect x="2478" y="1691.5" width="40.30000000000018" height="39" fill="#5b7fb6"/><path d="M2482 1704.7H2496M2489 1697.7V1711.7" stroke="#ffffff" stroke-width="2.600"/><rect x="2493.700" y="1714.4" width="20.700" height="7.500" fill="#ffffff"/><rect x="2496" y="1715.9" width="2" height="4.500" fill="#5b7fb6"/><path d="M2526.200 1698.2H2558.100M2526.200 1706.0H2558.100M2526.200 1716.0H2558.100" stroke="#dcdcdc" stroke-width="2.100"/><rect x="2526.200" y="1705.0" width="16" height="5.800" fill="#dcdcdc"/><rect x="2526.200" y="1715.0" width="16" height="7" fill="#dcdcdc"/><rect x="2566.2" y="1691.5" width="39.80000000000018" height="39" fill="#5b7fb6"/><rect x="2572" y="1695.7" width="28" height="28" stroke="#ffffff" stroke-width="2.400"/><rect x="2574.0" y="1697.7" width="4.800" height="4.800" fill="#ffffff"/><rect x="2574.0" y="1707.3" width="4.800" height="4.800" fill="#ffffff"/><rect x="2574.0" y="1716.9" width="4.800" height="4.800" fill="#ffffff"/><rect x="2578.8" y="1702.5" width="4.800" height="4.800" fill="#ffffff"/><rect x="2578.8" y="1712.1" width="4.800" height="4.800" fill="#ffffff"/><rect x="2583.6" y="1697.7" width="4.800" height="4.800" fill="#ffffff"/><rect x="2583.6" y="1707.3" width="4.800" height="4.800" fill="#ffffff"/><rect x="2583.6" y="1716.9" width="4.800" height="4.800" fill="#ffffff"/><rect x="2588.4" y="1702.5" width="4.800" height="4.800" fill="#ffffff"/><rect x="2588.4" y="1712.1" width="4.800" height="4.800" fill="#ffffff"/><rect x="2593.2" y="1697.7" width="4.800" height="4.800" fill="#ffffff"/><rect x="2593.2" y="1707.3" width="4.800" height="4.800" fill="#ffffff"/><rect x="2593.2" y="1716.9" width="4.800" height="4.800" fill="#ffffff"/><rect x="2610" y="1691.5" width="40.19999999999982" height="39" fill="#5b7fb6"/><path d="M2623 1696.7H2618V1710.7M2636 1696.7H2641V1710.7" stroke="#ffffff" stroke-width="2.200"/><rect x="2624" y="1700.7" width="11" height="8" stroke="#ffffff" stroke-width="2.200"/><rect x="2654.5" y="1691.5" width="39.5" height="39" fill="#5b7fb6"/><path d="M2668 1712.7L2682 1698.7" stroke="#ffffff" stroke-width="2.400"/><rect x="2698.5" y="1691.5" width="83.0" height="39" fill="#5b7fb6"/><rect x="2703" y="1696.7" width="8" height="8" stroke="#ffffff" stroke-width="2"/><path d="M2714 1700.7H2730M2730 1695.7V1709.7" stroke="#ffffff" stroke-width="2"/><path d="M2750 1706.7L2757 1694.7L2764 1706.7Z" fill="#ffffff"/><circle cx="2771" cy="1701.7" r="7" fill="#ffffff"/><path d="M2821 1694.7L2811 1707.7H2817L2813 1717.7L2826 1702.7H2819Z" fill="#f6cf74"/><text x="2868" y="1716.7" font-size="19" fill="#dcdcdc" font-family="'Liberation Sans',sans-serif">1:1</text><path d="M2902 1706.7L2908 1713.7L2921 1697.7" stroke="#dcdcdc" stroke-width="2.600"/><rect x="2936" y="1695.7" width="12" height="12" stroke="#dcdcdc" stroke-width="2"/><path d="M2944 1723.7L2951 1711.7L2958 1723.7Z" stroke="#dcdcdc" stroke-width="2"/><circle cx="2962" cy="1707.7" r="6" stroke="#dcdcdc" stroke-width="2"/><path d="M2955 1714.7L2975 1697.7" stroke="#dcdcdc" stroke-width="2"/><rect x="2991.0" y="1694.7" width="7" height="9" fill="#dcdcdc" transform="rotate(0 2994.5 1710.2)"/><rect x="2991.0" y="1694.7" width="7" height="9" fill="#dcdcdc" transform="rotate(45 2994.5 1710.2)"/><rect x="2991.0" y="1694.7" width="7" height="9" fill="#dcdcdc" transform="rotate(90 2994.5 1710.2)"/><rect x="2991.0" y="1694.7" width="7" height="9" fill="#dcdcdc" transform="rotate(135 2994.5 1710.2)"/><rect x="2991.0" y="1694.7" width="7" height="9" fill="#dcdcdc" transform="rotate(180 2994.5 1710.2)"/><rect x="2991.0" y="1694.7" width="7" height="9" fill="#dcdcdc" transform="rotate(225 2994.5 1710.2)"/><rect x="2991.0" y="1694.7" width="7" height="9" fill="#dcdcdc" transform="rotate(270 2994.5 1710.2)"/><rect x="2991.0" y="1694.7" width="7" height="9" fill="#dcdcdc" transform="rotate(315 2994.5 1710.2)"/><circle cx="2994.5" cy="1710.2" r="10.500" fill="#dcdcdc"/><circle cx="2994.5" cy="1710.2" r="4.800" fill="#3b4453"/></svg>
<div class="abs" style="left:2589px;top:1709px;width:259px;height:40px;border-radius:14px 14px 0 0;background:linear-gradient(#eef0f2,#dfe2e6);overflow:hidden;box-shadow:0 0 0 1.500px #3d86e8"><div class="abs" style="left:0;top:0;width:73px;height:40px;background:#3d86e8"></div><div class="abs" style="left:28px;top:19px;width:20px;height:20px;border-radius:50%;background:#dfe6f2;border:4px solid #f6f8fb"></div></div>
<div class="t" style="left:2724.5px;top:1680px;font-size:45px;font-family:'Liberation Serif','Noto Serif CJK SC',serif;font-weight:700;color:rgba(214,216,220,0.82)"><span style="letter-spacing:1.3px">dooooit@</span><span style="font-size:38px;font-weight:600;letter-spacing:-1px;margin-left:6px;position:relative;top:-2px">小柒</span></div>
<div class="abs" style="left:0;top:0;width:3024px;height:1734px;border-radius:22px 22px 20px 20px;box-shadow:inset 0 0 0 1.5px rgba(150,160,180,0.45);pointer-events:none"></div>
</div></body></html>
